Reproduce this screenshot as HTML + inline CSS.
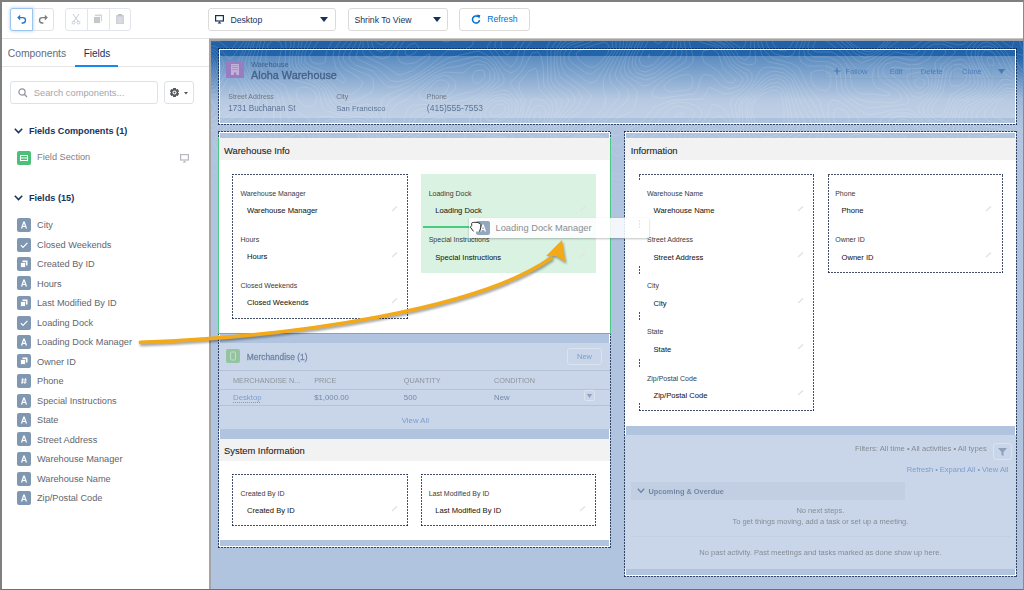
<!DOCTYPE html>
<html><head><meta charset="utf-8"><style>
*{box-sizing:border-box;margin:0;padding:0}
html,body{width:1024px;height:590px;overflow:hidden;background:#fff}
body{font-family:"Liberation Sans",sans-serif;position:relative;color:#16325c}
.a{position:absolute}
.t{position:absolute;white-space:nowrap;line-height:1}
svg{position:absolute;overflow:visible}
.dash{position:absolute}
.dash::before{content:"";position:absolute;left:1px;top:1px;right:1px;bottom:1px;box-shadow:inset 0 0 0 1px #fff}
.dash::after{content:"";position:absolute;left:0;top:0;right:0;bottom:0;background:repeating-linear-gradient(90deg,rgba(22,36,70,0.8) 0 2px,transparent 2px 3px) left top/100% 1px no-repeat,repeating-linear-gradient(90deg,rgba(22,36,70,0.8) 0 2px,transparent 2px 3px) left bottom/100% 1px no-repeat,repeating-linear-gradient(0deg,rgba(22,36,70,0.8) 0 2px,transparent 2px 3px) left top/1px 100% no-repeat,repeating-linear-gradient(0deg,rgba(22,36,70,0.8) 0 2px,transparent 2px 3px) right top/1px 100% no-repeat}
.fdash{position:absolute;background:repeating-linear-gradient(90deg,rgba(22,36,70,0.8) 0 2px,transparent 2px 3px) left top/100% 1px no-repeat,repeating-linear-gradient(90deg,rgba(22,36,70,0.8) 0 2px,transparent 2px 3px) left bottom/100% 1px no-repeat,repeating-linear-gradient(0deg,rgba(22,36,70,0.8) 0 2px,transparent 2px 3px) left top/1px 100% no-repeat,repeating-linear-gradient(0deg,rgba(22,36,70,0.8) 0 2px,transparent 2px 3px) right top/1px 100% no-repeat}
.fdashnl{position:absolute;background:repeating-linear-gradient(90deg,rgba(22,36,70,0.8) 0 2px,transparent 2px 3px) left top/100% 1px no-repeat,repeating-linear-gradient(90deg,rgba(22,36,70,0.8) 0 2px,transparent 2px 3px) left bottom/100% 1px no-repeat,repeating-linear-gradient(0deg,rgba(22,36,70,0.8) 0 2px,transparent 2px 3px) right top/1px 100% no-repeat}
</style></head><body>
<div class="a" style="left:0px;top:0px;width:1024px;height:38px;background:#fff"></div>
<div class="a" style="left:0px;top:38px;width:1024px;height:1px;background:#e4e4e4"></div>
<div class="a" style="left:10px;top:8px;width:44px;height:23px;border:1px solid #dfe3ea;border-radius:3px;background:#fff"></div>
<div class="a" style="left:10px;top:8px;width:23px;height:23px;border:1px solid #9cc4ee;border-radius:3px 0 0 3px;box-shadow:0 0 3px 1px #cfe2f8;background:#fff"></div>
<svg style="left:16px;top:13px" width="12" height="12" viewBox="0 0 12 12"><path d="M3.2 4.6 H6.8 a2.7 2.7 0 0 1 0 5.4 H5.6" fill="none" stroke="#2c74c4" stroke-width="1.4"/><path d="M1.2 4.6 L4.2 1.8 V7.4 Z" fill="#2c74c4"/></svg>
<svg style="left:37px;top:13px" width="12" height="12" viewBox="0 0 12 12"><path d="M8.8 4.6 H5.2 a2.7 2.7 0 0 0 0 5.4 H6.4" fill="none" stroke="#7a7c80" stroke-width="1.4"/><path d="M10.8 4.6 L7.8 1.8 V7.4 Z" fill="#7a7c80"/></svg>
<div class="a" style="left:65px;top:8px;width:66px;height:23px;border:1px solid #e2e6ec;border-radius:3px;background:#fff"></div>
<div class="a" style="left:87px;top:8px;width:1px;height:23px;background:#e2e6ec"></div>
<div class="a" style="left:109px;top:8px;width:1px;height:23px;background:#e2e6ec"></div>
<svg style="left:70px;top:13px" width="12" height="12" viewBox="0 0 12 12"><path d="M3 1 L8.5 9 M9 1 L3.5 9" stroke="#c9cdd2" stroke-width="1"/><circle cx="3.5" cy="9.6" r="1.4" fill="none" stroke="#c9cdd2"/><circle cx="8.5" cy="9.6" r="1.4" fill="none" stroke="#c9cdd2"/></svg>
<svg style="left:92px;top:13px" width="12" height="12" viewBox="0 0 12 12"><rect x="3" y="1.5" width="7" height="7" fill="#d2d5d9"/><rect x="1.5" y="3.5" width="7" height="7" fill="#c4c8cd" stroke="#fff" stroke-width="0.8"/></svg>
<svg style="left:114px;top:13px" width="12" height="12" viewBox="0 0 12 12"><rect x="2" y="2" width="8" height="9" fill="#cfd2d6"/><rect x="4" y="1" width="4" height="2" fill="#bfc3c8"/><path d="M3.5 5h5M3.5 7h5M3.5 9h5" stroke="#e8eaec" stroke-width="0.8"/></svg>
<div class="a" style="left:208px;top:8px;width:128px;height:23px;border:1px solid #dddbda;border-radius:3px;background:#fff"></div>
<svg style="left:215px;top:15px" width="9" height="9" viewBox="0 0 9 9"><rect x="0.6" y="0.6" width="7.8" height="5.4" fill="none" stroke="#16325c" stroke-width="1.2"/><path d="M2.5 8.6 L4.5 6.6 L6.5 8.6 Z" fill="#16325c"/></svg>
<div class="t" style="left:230.4px;top:15.85px;font-size:8.7px;color:#16325c;">Desktop</div>
<svg style="left:320px;top:17px" width="8" height="5" viewBox="0 0 8 5"><path d="M0 0H8L4 5Z" fill="#16325c"/></svg>
<div class="a" style="left:348px;top:8px;width:100px;height:23px;border:1px solid #dddbda;border-radius:3px;background:#fff"></div>
<div class="t" style="left:354.4px;top:15.85px;font-size:8.7px;color:#16325c;">Shrink To View</div>
<svg style="left:433px;top:17px" width="8" height="5" viewBox="0 0 8 5"><path d="M0 0H8L4 5Z" fill="#16325c"/></svg>
<div class="a" style="left:459px;top:8px;width:71px;height:23px;border:1px solid #dddbda;border-radius:3px;background:#fff"></div>
<svg style="left:471px;top:14px" width="11" height="11" viewBox="0 0 11 11"><path d="M8.6 6.2 A3.6 3.6 0 1 1 7.2 2.6" fill="none" stroke="#0070d2" stroke-width="1.5"/><path d="M5.6 0.6 L9.4 1.2 L8.2 4.8 Z" fill="#0070d2"/></svg>
<div class="t" style="left:487.2px;top:14.85px;font-size:8.7px;color:#0070d2;">Refresh</div>
<div class="t" style="left:7.75px;top:48.75px;font-size:10.3px;color:#5f6a7d;">Components</div>
<div class="t" style="left:83.7px;top:48.90px;font-size:10.0px;color:#16325c;">Fields</div>
<div class="a" style="left:0px;top:66px;width:209px;height:1px;background:#e6e6e6"></div>
<div class="a" style="left:75px;top:65px;width:43px;height:2px;background:#1589ee"></div>
<div class="a" style="left:10px;top:81px;width:148px;height:23px;border:1px solid #dde2ea;border-radius:3px;background:#fff"></div>
<svg style="left:18px;top:88px" width="10" height="10" viewBox="0 0 10 10"><circle cx="4" cy="4" r="3.1" fill="none" stroke="#8f939a" stroke-width="1.2"/><path d="M6.3 6.3 L9 9" stroke="#8f939a" stroke-width="1.3"/></svg>
<div class="t" style="left:33.8px;top:88.55px;font-size:9.3px;color:#a3a6ab;">Search components...</div>
<div class="a" style="left:164px;top:81px;width:30px;height:23px;border:1px solid #dde2ea;border-radius:3px;background:#fff"></div>
<svg style="left:169.3px;top:87.2px" width="11" height="11" viewBox="0 0 11 11"><path d="M3.76 2.46 L4.20 0.98 L6.80 0.98 L7.24 2.46 L7.26 2.48 L8.76 2.12 L10.06 4.37 L9.00 5.49 L9.00 5.51 L10.06 6.63 L8.76 8.88 L7.26 8.52 L7.24 8.54 L6.80 10.02 L4.20 10.02 L3.76 8.54 L3.74 8.52 L2.24 8.88 L0.94 6.63 L2.00 5.51 L2.00 5.49 L0.94 4.37 L2.24 2.12 L3.74 2.48Z" fill="#54565a"/><circle cx="5.5" cy="5.5" r="2" fill="#fff"/><circle cx="5.5" cy="5.5" r="1" fill="#54565a"/></svg>
<svg style="left:183.6px;top:91.8px" width="4" height="3" viewBox="0 0 4 3"><path d="M0 0H4L2 2.6Z" fill="#54565a"/></svg>
<svg style="left:14px;top:128px" width="9" height="6" viewBox="0 0 9 6"><path d="M0.8 0.8 L4.5 4.6 L8.2 0.8" fill="none" stroke="#16325c" stroke-width="1.5"/></svg>
<div class="t" style="left:28.9px;top:127.03px;font-size:9.13px;color:#16325c;font-weight:bold;">Fields Components (1)</div>
<div class="a" style="left:17px;top:151px;width:14px;height:14px;background:#4bc076;border-radius:2px"></div>
<svg style="left:20px;top:155px" width="8" height="6" viewBox="0 0 8 6"><rect x="0.5" y="0.5" width="7" height="5" fill="none" stroke="#fff" stroke-width="1"/><path d="M0.5 3h7" stroke="#fff"/></svg>
<div class="t" style="left:37.1px;top:153.40px;font-size:9.2px;color:#7d8087;">Field Section</div>
<svg style="left:180px;top:154px" width="9" height="9" viewBox="0 0 9 9"><rect x="0.6" y="0.6" width="7.8" height="5.4" fill="none" stroke="#b5b8bc" stroke-width="1.2"/><path d="M2.5 8.6 L4.5 6.6 L6.5 8.6 Z" fill="#b5b8bc"/></svg>
<svg style="left:14px;top:195px" width="9" height="6" viewBox="0 0 9 6"><path d="M0.8 0.8 L4.5 4.6 L8.2 0.8" fill="none" stroke="#16325c" stroke-width="1.5"/></svg>
<div class="t" style="left:28.9px;top:194.02px;font-size:9.16px;color:#16325c;font-weight:bold;">Fields (15)</div>
<div class="a" style="left:17px;top:218px;width:14px;height:14px;background:#7f97b0;border-radius:2px"></div>
<svg style="left:17px;top:218px" width="14" height="14" viewBox="0 0 14 14"><path d="M3.9 10.6 L6.3 3.6 H7.7 L10.1 10.6 H8.7 L8.2 9 H5.8 L5.3 10.6 Z M6.15 7.9 H7.85 L7 5.2 Z" fill="#fff" fill-rule="evenodd"/></svg>
<div class="t" style="left:37px;top:221.10px;font-size:9.2px;color:#62666d;">City</div>
<div class="a" style="left:17px;top:238px;width:14px;height:14px;background:#7f97b0;border-radius:2px"></div>
<svg style="left:17px;top:238px" width="14" height="14" viewBox="0 0 14 14"><path d="M3.8 7.2 L6 9.4 L10.4 4.8" fill="none" stroke="#fff" stroke-width="1.2"/></svg>
<div class="t" style="left:37px;top:240.60px;font-size:9.2px;color:#62666d;">Closed Weekends</div>
<div class="a" style="left:17px;top:257px;width:14px;height:14px;background:#7f97b0;border-radius:2px"></div>
<svg style="left:17px;top:257px" width="14" height="14" viewBox="0 0 14 14"><rect x="5.5" y="3.5" width="5" height="5" fill="#fff"/><rect x="3.5" y="5.5" width="5" height="5" fill="#fff" stroke="#7f97b0" stroke-width="0.8"/></svg>
<div class="t" style="left:37px;top:260.10px;font-size:9.2px;color:#62666d;">Created By ID</div>
<div class="a" style="left:17px;top:276px;width:14px;height:14px;background:#7f97b0;border-radius:2px"></div>
<svg style="left:17px;top:276px" width="14" height="14" viewBox="0 0 14 14"><path d="M3.9 10.6 L6.3 3.6 H7.7 L10.1 10.6 H8.7 L8.2 9 H5.8 L5.3 10.6 Z M6.15 7.9 H7.85 L7 5.2 Z" fill="#fff" fill-rule="evenodd"/></svg>
<div class="t" style="left:37px;top:279.60px;font-size:9.2px;color:#62666d;">Hours</div>
<div class="a" style="left:17px;top:296px;width:14px;height:14px;background:#7f97b0;border-radius:2px"></div>
<svg style="left:17px;top:296px" width="14" height="14" viewBox="0 0 14 14"><rect x="5.5" y="3.5" width="5" height="5" fill="#fff"/><rect x="3.5" y="5.5" width="5" height="5" fill="#fff" stroke="#7f97b0" stroke-width="0.8"/></svg>
<div class="t" style="left:37px;top:299.10px;font-size:9.2px;color:#62666d;">Last Modified By ID</div>
<div class="a" style="left:17px;top:316px;width:14px;height:14px;background:#7f97b0;border-radius:2px"></div>
<svg style="left:17px;top:316px" width="14" height="14" viewBox="0 0 14 14"><path d="M3.8 7.2 L6 9.4 L10.4 4.8" fill="none" stroke="#fff" stroke-width="1.2"/></svg>
<div class="t" style="left:37px;top:318.60px;font-size:9.2px;color:#62666d;">Loading Dock</div>
<div class="a" style="left:17px;top:335px;width:14px;height:14px;background:#7f97b0;border-radius:2px"></div>
<svg style="left:17px;top:335px" width="14" height="14" viewBox="0 0 14 14"><path d="M3.9 10.6 L6.3 3.6 H7.7 L10.1 10.6 H8.7 L8.2 9 H5.8 L5.3 10.6 Z M6.15 7.9 H7.85 L7 5.2 Z" fill="#fff" fill-rule="evenodd"/></svg>
<div class="t" style="left:37px;top:338.10px;font-size:9.2px;color:#62666d;">Loading Dock Manager</div>
<div class="a" style="left:17px;top:354px;width:14px;height:14px;background:#7f97b0;border-radius:2px"></div>
<svg style="left:17px;top:354px" width="14" height="14" viewBox="0 0 14 14"><rect x="5.5" y="3.5" width="5" height="5" fill="#fff"/><rect x="3.5" y="5.5" width="5" height="5" fill="#fff" stroke="#7f97b0" stroke-width="0.8"/></svg>
<div class="t" style="left:37px;top:357.60px;font-size:9.2px;color:#62666d;">Owner ID</div>
<div class="a" style="left:17px;top:374px;width:14px;height:14px;background:#7f97b0;border-radius:2px"></div>
<svg style="left:17px;top:374px" width="14" height="14" viewBox="0 0 14 14"><path d="M5.8 4 L5 10 M8.6 4 L7.8 10 M4.2 6 H9.8 M4 8.2 H9.6" fill="none" stroke="#fff" stroke-width="0.9"/></svg>
<div class="t" style="left:37px;top:377.10px;font-size:9.2px;color:#62666d;">Phone</div>
<div class="a" style="left:17px;top:394px;width:14px;height:14px;background:#7f97b0;border-radius:2px"></div>
<svg style="left:17px;top:394px" width="14" height="14" viewBox="0 0 14 14"><path d="M3.9 10.6 L6.3 3.6 H7.7 L10.1 10.6 H8.7 L8.2 9 H5.8 L5.3 10.6 Z M6.15 7.9 H7.85 L7 5.2 Z" fill="#fff" fill-rule="evenodd"/></svg>
<div class="t" style="left:37px;top:396.60px;font-size:9.2px;color:#62666d;">Special Instructions</div>
<div class="a" style="left:17px;top:413px;width:14px;height:14px;background:#7f97b0;border-radius:2px"></div>
<svg style="left:17px;top:413px" width="14" height="14" viewBox="0 0 14 14"><path d="M3.9 10.6 L6.3 3.6 H7.7 L10.1 10.6 H8.7 L8.2 9 H5.8 L5.3 10.6 Z M6.15 7.9 H7.85 L7 5.2 Z" fill="#fff" fill-rule="evenodd"/></svg>
<div class="t" style="left:37px;top:416.10px;font-size:9.2px;color:#62666d;">State</div>
<div class="a" style="left:17px;top:432px;width:14px;height:14px;background:#7f97b0;border-radius:2px"></div>
<svg style="left:17px;top:432px" width="14" height="14" viewBox="0 0 14 14"><path d="M3.9 10.6 L6.3 3.6 H7.7 L10.1 10.6 H8.7 L8.2 9 H5.8 L5.3 10.6 Z M6.15 7.9 H7.85 L7 5.2 Z" fill="#fff" fill-rule="evenodd"/></svg>
<div class="t" style="left:37px;top:435.60px;font-size:9.2px;color:#62666d;">Street Address</div>
<div class="a" style="left:17px;top:452px;width:14px;height:14px;background:#7f97b0;border-radius:2px"></div>
<svg style="left:17px;top:452px" width="14" height="14" viewBox="0 0 14 14"><path d="M3.9 10.6 L6.3 3.6 H7.7 L10.1 10.6 H8.7 L8.2 9 H5.8 L5.3 10.6 Z M6.15 7.9 H7.85 L7 5.2 Z" fill="#fff" fill-rule="evenodd"/></svg>
<div class="t" style="left:37px;top:455.10px;font-size:9.2px;color:#62666d;">Warehouse Manager</div>
<div class="a" style="left:17px;top:472px;width:14px;height:14px;background:#7f97b0;border-radius:2px"></div>
<svg style="left:17px;top:472px" width="14" height="14" viewBox="0 0 14 14"><path d="M3.9 10.6 L6.3 3.6 H7.7 L10.1 10.6 H8.7 L8.2 9 H5.8 L5.3 10.6 Z M6.15 7.9 H7.85 L7 5.2 Z" fill="#fff" fill-rule="evenodd"/></svg>
<div class="t" style="left:37px;top:474.60px;font-size:9.2px;color:#62666d;">Warehouse Name</div>
<div class="a" style="left:17px;top:491px;width:14px;height:14px;background:#7f97b0;border-radius:2px"></div>
<svg style="left:17px;top:491px" width="14" height="14" viewBox="0 0 14 14"><path d="M3.9 10.6 L6.3 3.6 H7.7 L10.1 10.6 H8.7 L8.2 9 H5.8 L5.3 10.6 Z M6.15 7.9 H7.85 L7 5.2 Z" fill="#fff" fill-rule="evenodd"/></svg>
<div class="t" style="left:37px;top:494.10px;font-size:9.2px;color:#62666d;">Zip/Postal Code</div>
<div class="a" style="left:209px;top:38px;width:815px;height:552px;background:#a4a4a4"></div>
<div class="a" style="left:209px;top:38px;width:815px;height:1px;background:#c8c8c8"></div>
<div class="a" style="left:211px;top:41px;width:812px;height:548px;background:linear-gradient(#1f60a8 0px,#2365ab 15px,#a0b8d8 59px,#b0c4df 84px,#b0c4df 100%)"></div>
<svg style="left:0;top:0;opacity:0.17;-webkit-mask-image:linear-gradient(to bottom,#000 0,#000 125px,transparent 230px)" width="1024" height="590" viewBox="0 0 1024 590"><defs><clipPath id="cc"><rect x="211" y="41" width="812" height="548"/></clipPath></defs><g clip-path="url(#cc)"><path d="M196 41 205 38 207 35 208 26 M839 26 843 35 852 44 862 50 868 52 877 49 883 44 888 35 890 26 M943 26 948 29 952 29 958 26 M777 131 784 122 784 107 781 94 778 91 772 90 763 94 755 101 752 107 752 113 756 125 761 131 769 134 777 131 M196 118 205 114 208 107 205 101 196 97 M585 164 591 161 593 158 592 154 589 152 582 155 578 161 580 164 585 164 M911 233 911 227 904 212 900 206 895 204 892 206 889 212 889 218 891 224 901 233 907 235 911 233 M1033 242 1027 245 1025 248 1027 252 1033 253 M561 359 562 356 560 350 556 346 553 346 549 353 550 359 556 362 561 359 M933 395 936 389 937 374 949 369 953 365 953 356 951 353 946 350 940 352 937 356 934 368 919 374 915 380 917 389 921 395 928 397 933 395 M1033 453 1021 455 1018 458 1017 464 1021 492 1026 500 1033 503 M552 566 561 560 563 554 563 548 556 543 541 542 538 548 540 560 544 565 552 566 M837 599 835 597 832 596 829 599 M196 43 206 41 211 38 212 26 M722 26 726 29 733 31 738 29 739 26 M835 26 840 35 850 45 859 52 868 55 877 51 886 44 891 35 893 26 M936 26 943 31 952 33 958 32 963 26 M772 137 784 131 789 122 785 95 781 88 775 86 766 89 757 96 751 104 749 110 753 125 757 133 763 137 772 137 M234 95 236 92 235 89 232 86 229 92 231 95 234 95 M196 122 208 118 213 113 215 107 212 101 208 98 196 94 M586 167 592 164 596 158 595 152 592 149 583 150 573 161 572 164 574 167 580 168 586 167 M916 242 919 236 918 230 901 202 895 200 889 205 886 212 885 218 888 227 895 236 904 243 910 245 916 242 M1033 238 1021 241 1017 245 1016 251 1018 257 1021 259 1033 260 M863 314 864 308 862 304 859 301 853 303 852 308 853 311 859 315 863 314 M562 365 566 359 563 347 556 339 550 340 545 350 544 362 546 365 550 367 556 367 562 365 M929 401 937 396 945 380 952 374 956 368 958 362 957 356 954 350 949 346 943 346 937 349 928 362 914 371 910 377 911 386 916 394 922 400 929 401 M641 413 641 407 640 405 637 405 634 408 634 413 637 415 641 413 M214 449 219 446 221 443 221 440 217 437 208 437 200 443 200 446 205 449 214 449 M1033 449 1024 449 1018 451 1015 455 1014 464 1015 485 1017 494 1025 503 1033 507 M557 569 563 563 567 554 568 545 565 539 535 528 529 529 528 536 538 566 547 572 557 569 M840 599 838 595 832 593 829 594 826 599 M931 599 925 596 904 594 898 595 894 599 M230 26 226 33 220 35 216 26 M196 45 217 41 220 42 229 49 232 49 240 38 243 26 M656 26 658 31 661 33 664 31 666 26 M715 26 724 32 736 36 742 32 743 26 M831 26 833 32 841 41 856 54 865 58 874 55 886 47 893 38 897 26 M911 26 913 28 916 29 925 26 940 33 955 35 964 32 967 26 M196 125 210 122 223 111 235 105 241 100 243 92 238 81 232 76 229 77 220 93 217 95 196 92 M442 95 446 92 449 86 448 83 444 80 439 80 434 83 426 92 427 95 430 97 436 97 442 95 M772 140 786 134 793 125 787 92 784 86 778 82 769 84 760 90 751 99 747 107 748 117 753 134 760 139 772 140 M585 170 592 167 598 161 598 152 592 146 586 147 580 150 571 158 567 164 568 168 571 171 577 172 585 170 M259 158 261 155 260 152 256 149 254 152 254 155 259 158 M913 257 922 246 924 233 901 197 895 196 889 201 883 209 882 215 882 224 887 233 907 257 913 257 M615 251 619 248 622 239 621 230 616 227 610 230 605 245 607 250 615 251 M1033 235 1018 237 1013 242 1010 251 1012 257 1018 263 1024 265 1033 264 M403 275 405 269 403 267 400 266 397 269 397 272 400 275 403 275 M297 299 301 293 299 287 295 283 290 284 287 287 288 293 292 298 297 299 M871 320 869 305 865 298 856 296 849 299 847 305 850 315 856 319 865 323 868 323 871 320 M244 320 244 313 241 312 241 320 244 320 M419 329 422 323 421 320 416 317 409 318 403 323 403 326 406 330 412 331 419 329 M523 398 532 392 544 376 562 370 568 365 569 356 566 347 559 336 553 331 550 331 545 335 536 362 511 395 510 398 514 400 523 398 M618 365 625 354 627 347 625 341 619 338 614 344 612 359 613 365 616 366 618 365 M930 404 934 403 940 399 947 386 959 371 961 365 960 356 958 350 952 344 946 343 937 345 925 359 910 368 905 374 906 383 913 395 922 403 930 404 M694 362 698 356 698 353 694 351 688 353 685 359 688 363 694 362 M280 398 283 395 282 389 277 380 274 377 271 377 268 389 270 398 274 401 280 398 M641 422 646 418 648 410 646 399 640 393 637 394 631 401 626 413 628 418 631 421 637 423 641 422 M575 434 577 428 575 425 571 424 567 425 565 428 567 434 571 435 575 434 M196 453 208 454 218 452 226 446 228 440 227 437 223 434 217 432 208 433 196 436 M1033 446 1021 446 1015 448 1012 455 1011 464 1011 485 1013 494 1024 506 1033 510 M973 479 976 473 973 461 970 455 964 450 961 452 964 465 968 476 970 478 973 479 M526 488 529 485 530 482 526 480 521 482 518 488 520 491 526 488 M479 500 480 497 477 491 472 487 470 488 469 491 471 497 475 500 479 500 M554 578 565 567 570 557 574 533 572 524 568 521 562 520 547 524 526 520 520 521 520 530 528 548 535 568 547 578 550 580 554 578 M626 563 627 560 625 559 622 560 622 563 626 563 M682 599 682 587 679 584 673 593 672 599 M843 599 840 593 832 590 827 593 824 599 M937 599 934 596 928 593 904 592 895 594 890 599 M196 46 214 46 220 49 229 59 232 58 244 41 248 26 M325 26 320 38 309 56 312 62 316 64 322 64 325 62 327 50 336 35 337 26 M652 26 655 42 658 44 664 40 667 36 670 26 M711 26 717 32 739 40 744 35 747 26 M827 26 829 32 833 38 856 60 862 63 874 58 901 39 910 40 928 33 959 38 967 34 971 26 M650 56 649 54 648 56 649 58 650 56 M196 128 211 126 238 110 244 104 248 95 244 83 232 67 229 68 220 84 216 89 211 91 196 90 M479 83 485 77 484 71 481 70 475 71 472 77 474 83 479 83 M958 86 964 83 967 77 964 71 958 68 952 71 949 80 951 86 958 86 M435 101 445 98 455 89 456 83 451 77 445 75 436 78 429 83 420 92 419 95 421 99 427 101 435 101 M769 143 781 140 793 134 797 131 799 125 789 89 784 81 778 78 769 80 760 87 749 98 745 107 748 131 750 137 757 141 769 143 M540 119 541 116 540 113 538 112 535 114 534 119 535 122 538 122 540 119 M262 164 267 158 266 152 260 143 253 142 250 143 248 149 249 158 256 165 262 164 M501 158 503 152 502 146 499 145 496 145 492 149 492 155 496 160 501 158 M583 173 597 167 601 161 601 152 595 145 589 144 583 146 564 161 563 167 568 174 574 175 583 173 M860 161 862 158 859 161 860 161 M915 266 921 263 925 257 928 239 928 230 913 213 903 194 898 191 892 195 882 206 878 215 878 224 882 233 894 248 899 263 901 266 907 268 915 266 M618 254 625 247 627 236 625 227 622 223 616 221 610 223 607 227 601 242 600 248 602 251 607 255 613 255 618 254 M1033 232 1018 233 1012 236 1008 242 1006 251 1009 260 1015 266 1021 269 1033 268 M404 281 409 276 410 269 407 263 400 261 394 265 392 272 397 280 404 281 M676 275 676 272 673 274 673 275 676 275 M300 302 304 293 302 284 295 279 287 281 283 287 286 297 292 303 295 304 300 302 M872 329 875 326 876 320 872 299 869 293 865 291 859 291 847 295 844 299 843 305 847 316 862 327 868 329 872 329 M247 326 249 320 248 311 244 305 241 303 238 305 237 308 237 323 241 329 244 329 247 326 M423 332 426 329 429 323 426 317 421 314 415 313 409 314 403 318 399 323 400 329 406 333 415 334 423 332 M491 416 505 407 529 400 535 395 548 380 553 377 568 372 571 370 572 362 569 347 556 324 553 321 547 323 540 329 533 356 522 374 502 398 489 407 487 413 491 416 M622 374 631 347 626 338 619 334 616 335 613 338 607 365 610 371 613 373 619 375 622 374 M939 404 945 398 959 377 963 365 963 356 960 347 955 342 949 340 940 341 934 344 922 356 902 368 897 377 900 383 919 404 928 407 939 404 M196 357 199 353 199 349 196 346 M696 365 701 359 703 353 703 350 697 347 691 347 685 350 680 359 681 365 685 367 691 367 696 365 M274 407 284 401 287 398 288 392 274 364 268 362 265 365 265 404 268 408 274 407 M640 428 649 422 652 416 652 407 650 395 646 387 643 385 637 383 634 384 631 388 622 413 623 419 628 425 634 428 640 428 M578 437 580 434 581 428 579 422 571 419 561 422 559 428 561 434 565 437 571 439 578 437 M196 457 211 457 223 453 231 446 234 437 232 431 226 430 211 429 196 432 M976 485 980 482 981 476 976 458 971 449 964 443 958 440 955 441 953 443 953 449 964 479 970 485 976 485 M1033 444 1018 443 1012 446 1009 455 1006 488 1008 494 1015 503 1024 510 1033 512 M885 458 886 455 883 450 880 449 877 450 876 452 878 458 880 460 883 461 885 458 M563 599 561 581 570 563 581 533 589 524 601 519 607 514 611 506 610 501 601 500 580 511 559 512 544 517 538 517 527 512 524 506 525 500 535 490 537 485 537 479 532 473 526 472 517 476 502 495 496 500 490 497 475 479 469 477 466 478 461 485 462 494 475 506 505 521 511 525 525 548 531 569 546 587 548 599 M433 515 436 514 440 509 441 503 439 500 433 500 428 506 429 512 433 515 M629 566 632 560 631 556 628 554 622 555 616 560 616 565 619 568 625 568 629 566 M686 599 688 578 685 573 682 573 678 575 673 582 667 599 M845 599 841 591 832 588 826 591 823 599 M940 599 934 592 922 589 898 590 891 593 887 599 M196 132 208 132 214 130 226 121 241 114 251 104 253 98 252 92 240 71 238 62 247 41 251 26 M318 26 315 35 305 53 305 62 310 66 328 73 343 83 346 80 336 68 333 56 334 50 345 35 346 26 M649 26 648 41 639 59 641 65 646 67 653 65 664 52 670 40 673 26 M707 26 712 32 727 39 742 49 745 45 749 26 M823 26 824 35 827 41 844 54 859 73 862 74 878 59 895 48 910 49 925 39 931 37 961 41 970 35 975 26 M196 48 208 48 215 50 221 56 224 65 220 77 214 86 208 88 196 88 M402 125 409 107 415 105 436 104 460 94 475 91 484 86 490 80 490 71 484 65 478 64 472 66 463 73 445 72 433 77 406 100 397 104 391 110 389 116 391 123 397 127 402 125 M941 116 944 113 951 95 970 83 970 74 967 68 961 64 953 65 947 71 943 92 932 107 931 110 934 115 937 116 941 116 M781 143 802 134 805 131 806 125 798 107 790 83 784 77 775 75 766 78 749 95 742 104 742 110 744 134 748 141 763 145 781 143 M538 128 544 122 546 113 544 107 538 105 532 109 528 119 530 125 534 128 538 128 M257 170 262 169 268 164 271 155 265 143 259 137 253 136 247 139 245 143 243 152 250 167 253 170 257 170 M501 164 505 161 508 152 505 142 499 139 490 145 488 149 488 155 490 161 493 164 501 164 M581 176 597 170 604 164 605 158 604 152 601 146 595 142 589 142 583 144 561 158 559 161 560 170 565 177 571 179 581 176 M851 179 869 161 871 155 868 150 862 150 857 152 844 172 842 179 844 181 847 182 851 179 M937 275 932 251 933 227 932 224 922 219 915 212 910 203 904 186 901 185 898 186 882 203 876 212 874 218 876 230 891 251 891 269 901 273 922 272 934 277 937 275 M948 218 956 212 959 206 958 202 952 202 946 207 942 215 943 218 948 218 M620 257 629 248 631 242 631 233 630 227 625 221 619 218 613 218 607 221 604 226 596 248 599 254 604 257 613 259 620 257 M262 230 264 227 262 224 256 221 253 222 253 227 256 230 262 230 M508 242 511 236 510 230 508 226 502 225 499 227 498 230 499 236 502 241 508 242 M363 242 367 238 368 233 364 230 358 230 355 233 353 239 355 243 358 244 363 242 M1033 230 1015 229 1009 231 1003 239 1001 248 1006 260 1015 270 1021 272 1033 272 M408 284 413 275 412 263 406 258 397 258 389 266 388 275 393 281 397 284 403 286 408 284 M679 281 682 278 684 272 681 266 676 264 668 269 666 275 670 281 679 281 M829 281 829 275 824 269 820 267 814 269 813 275 816 281 823 284 829 281 M297 308 302 305 306 299 306 287 300 278 295 276 289 277 282 281 280 284 280 290 289 305 292 308 297 308 M877 332 881 323 874 281 843 293 840 299 840 305 843 314 847 320 868 334 874 334 877 332 M492 425 496 423 508 411 535 401 553 382 572 377 576 374 577 368 573 353 557 311 557 305 559 296 556 289 553 289 550 293 552 308 547 314 533 326 531 350 521 371 505 390 487 401 481 407 479 413 481 419 487 424 492 425 M244 335 250 328 251 314 247 302 238 297 235 299 234 302 234 323 238 332 241 335 244 335 M429 335 442 328 447 320 447 314 445 313 433 314 418 309 412 309 403 314 397 320 396 326 397 329 403 334 415 337 429 335 M645 431 652 425 656 416 652 374 637 374 633 371 631 365 635 350 633 344 625 334 616 331 613 333 610 338 603 362 603 368 607 374 623 386 624 395 618 413 621 422 628 430 634 433 640 433 645 431 M940 407 947 401 961 380 965 368 966 356 964 347 960 341 952 337 943 337 933 341 919 353 899 362 886 377 886 380 889 383 901 389 919 406 928 410 940 407 M196 363 202 360 204 353 202 346 196 341 M688 371 697 367 703 361 709 350 709 347 706 344 691 344 685 347 678 353 674 359 674 365 679 370 688 371 M262 419 287 404 290 401 292 395 277 361 274 358 268 356 262 357 259 359 259 362 261 377 261 398 254 419 262 419 M578 440 583 434 584 428 583 422 581 419 574 416 568 415 560 416 555 419 553 422 553 428 559 437 568 442 574 442 578 440 M196 460 217 458 229 453 235 446 243 428 243 425 238 424 196 428 M981 488 984 485 986 479 976 452 970 444 961 436 955 434 952 435 947 440 945 446 955 463 962 482 964 485 970 489 976 490 981 488 M1033 441 1015 440 1009 444 1001 488 1003 497 1009 503 1022 512 1033 515 M884 473 890 461 891 452 889 448 884 443 874 441 868 446 867 455 877 470 880 473 884 473 M568 599 567 581 579 548 589 531 607 519 613 512 618 500 618 494 604 495 580 504 556 507 544 511 538 512 533 509 531 503 541 490 541 479 535 469 526 467 520 468 514 472 502 485 496 489 490 488 475 473 469 471 463 472 459 476 451 494 448 495 433 495 426 500 423 506 424 512 428 518 433 521 439 518 451 495 463 502 493 524 508 531 522 551 526 569 542 587 545 599 M631 482 634 478 635 473 634 470 631 469 628 473 627 479 628 483 631 482 M256 485 262 479 262 475 259 472 250 473 246 476 246 482 250 486 256 485 M332 494 337 491 338 488 337 482 331 479 325 481 321 485 322 490 327 494 332 494 M630 569 633 566 635 560 634 554 631 552 622 552 616 555 612 560 612 566 614 569 622 571 630 569 M854 557 855 554 853 552 850 551 847 554 849 557 854 557 M689 599 695 569 688 566 682 567 676 571 667 587 663 599 M848 599 843 590 835 586 826 588 822 593 821 599 M944 599 935 590 922 586 895 589 887 593 883 599 M1033 589 1024 593 1021 599 M196 136 202 137 208 140 210 143 198 155 198 158 208 163 214 162 218 155 217 149 214 143 216 137 226 127 247 118 258 104 258 95 245 74 241 65 242 59 250 41 254 26 M312 26 310 35 302 53 301 62 306 68 325 77 343 94 349 95 358 91 363 83 358 77 343 68 338 59 340 50 349 38 351 26 M646 26 645 38 637 54 635 62 637 68 641 71 646 72 655 68 670 55 672 50 676 26 M704 26 709 33 727 42 733 47 739 57 745 60 750 56 752 26 M820 26 818 35 813 47 814 51 817 52 832 52 843 59 849 68 852 86 857 92 862 94 874 94 886 96 890 95 888 92 877 88 874 85 872 77 874 68 882 59 895 52 913 55 917 53 925 44 931 41 942 41 958 45 964 44 975 35 981 26 M992 26 1000 35 1006 38 1010 35 1013 26 M196 49 208 50 214 52 219 59 221 65 219 74 214 82 208 85 196 86 M944 119 954 98 958 95 970 89 975 83 974 77 970 67 964 60 961 59 952 61 944 68 940 89 928 107 928 113 934 119 940 121 944 119 M401 131 408 125 413 113 418 110 469 99 478 95 489 86 494 80 495 74 492 68 487 63 478 60 460 66 445 68 433 74 409 90 391 100 388 104 385 110 386 122 389 128 393 131 401 131 M1033 63 1027 65 1028 68 1033 71 M780 146 808 138 812 134 813 128 810 119 802 106 792 80 784 73 775 71 769 72 763 76 741 101 739 110 741 137 745 144 751 146 763 148 780 146 M541 131 547 121 550 110 548 104 544 101 535 98 532 100 529 106 525 119 525 125 532 132 538 133 541 131 M683 116 682 113 679 113 675 116 679 117 683 116 M254 176 262 173 269 167 273 161 274 155 273 149 265 137 259 132 253 129 247 131 244 135 240 143 239 149 246 176 250 177 254 176 M668 143 667 135 664 131 658 132 652 137 651 140 655 143 664 145 668 143 M503 167 510 161 511 152 508 139 502 136 496 137 490 140 485 146 484 152 486 161 490 167 496 169 503 167 M580 179 608 167 609 161 607 152 604 146 598 141 592 139 586 141 555 158 555 167 562 178 571 182 580 179 M849 188 874 158 875 152 871 147 862 145 856 148 838 173 836 179 837 185 844 189 849 188 M395 188 398 182 397 175 394 169 388 166 385 170 385 177 391 189 394 190 395 188 M878 338 883 332 885 326 880 299 881 290 884 284 892 278 916 277 925 281 937 292 942 290 945 281 936 251 935 242 937 233 941 227 955 219 967 207 973 204 983 203 983 200 961 195 952 195 946 200 934 216 925 217 918 212 912 203 910 194 910 180 907 178 901 179 895 184 876 206 869 218 870 230 886 251 886 257 883 262 868 267 859 281 853 285 844 286 838 285 833 272 826 265 817 262 811 264 808 272 810 281 817 287 832 291 835 293 839 311 844 320 865 338 871 340 878 338 M621 260 628 255 633 248 635 242 635 233 632 224 627 218 621 215 613 215 607 217 603 221 593 245 593 251 598 257 604 260 613 261 621 260 M269 233 272 227 266 221 256 217 249 218 247 224 253 232 262 235 269 233 M508 251 511 250 515 245 515 233 511 222 508 220 502 219 495 224 494 233 499 245 505 250 508 251 M1033 227 1003 223 999 230 996 245 1000 257 1015 274 1021 277 1033 276 M363 248 374 236 376 230 374 227 367 225 358 226 349 233 348 242 352 248 358 251 363 248 M407 290 412 286 415 279 416 269 415 260 409 255 397 254 391 258 387 263 384 269 384 275 387 281 394 287 403 290 407 290 M681 284 687 278 689 269 685 262 682 260 676 259 666 266 663 272 663 278 667 284 670 285 681 284 M362 287 364 286 367 281 367 275 363 269 358 267 352 271 351 278 355 285 362 287 M299 311 306 305 309 299 309 287 307 281 301 275 295 273 289 274 278 281 277 290 289 310 295 313 299 311 M579 443 584 437 587 428 587 422 583 416 574 412 546 407 548 395 555 386 562 383 578 383 582 380 585 374 566 329 563 311 563 290 559 281 556 279 550 282 543 290 543 305 541 311 529 318 526 323 528 347 524 359 518 371 502 389 479 401 475 407 474 416 480 425 496 436 499 433 504 419 511 413 526 409 541 409 543 410 543 425 551 434 565 444 574 445 579 443 M196 464 218 461 229 458 236 452 244 437 250 430 291 407 296 401 295 392 277 356 271 352 255 350 250 347 249 341 254 323 253 308 247 297 235 291 232 291 230 296 232 326 241 346 253 362 257 371 259 383 257 401 250 411 241 417 223 423 196 425 M432 365 439 359 441 347 451 327 454 314 454 308 451 305 448 305 433 308 415 305 409 306 395 317 393 323 393 329 397 334 403 337 423 341 429 344 430 350 426 362 427 365 432 365 M639 440 652 432 657 425 659 416 659 392 664 381 670 377 688 374 697 370 703 365 715 351 733 344 736 341 735 338 727 336 694 341 682 345 667 355 655 354 643 355 635 341 626 332 616 328 610 331 605 350 598 365 598 371 618 389 619 395 614 413 617 422 631 438 634 440 639 440 M942 410 949 405 963 383 968 368 968 353 966 341 961 336 955 333 946 333 937 336 916 350 898 354 881 371 878 377 880 384 901 393 916 407 922 411 931 413 942 410 M196 367 205 364 208 356 204 344 196 338 M338 389 340 383 337 377 325 370 322 369 319 371 320 380 325 388 331 390 338 389 M1004 392 1006 389 1003 389 1004 392 M412 413 411 410 406 407 402 410 401 413 406 416 412 413 M1033 439 1015 436 1009 437 1004 446 1001 473 997 478 994 479 988 472 976 447 967 437 958 430 952 430 937 440 925 443 922 446 920 452 922 455 925 456 940 454 946 457 954 467 960 485 967 492 976 494 991 493 1002 506 1024 516 1033 518 M887 482 896 458 896 452 893 446 886 440 877 436 871 436 865 440 862 445 860 452 861 458 879 482 883 484 887 482 M577 599 573 587 573 578 580 552 590 536 612 518 626 497 637 484 641 473 640 466 637 461 634 459 628 462 619 482 613 488 574 501 553 502 545 500 546 485 541 471 535 464 523 461 514 464 502 477 496 481 490 480 475 468 469 466 461 467 457 470 448 487 427 494 423 497 420 503 421 512 427 523 433 527 439 525 451 505 457 503 472 511 493 529 508 539 517 551 519 560 517 565 508 568 505 571 503 578 504 581 508 582 520 575 526 576 538 585 542 593 543 599 M258 488 267 479 268 472 265 469 259 468 246 470 243 473 241 479 244 487 250 491 258 488 M334 497 339 494 342 488 340 479 331 475 320 479 316 485 319 492 326 497 334 497 M196 512 199 511 201 506 199 501 196 498 M772 557 775 553 775 546 772 541 769 540 763 546 762 554 766 558 772 557 M857 563 861 557 861 551 853 545 844 546 840 551 843 560 850 564 857 563 M257 563 263 557 264 551 250 546 244 548 243 557 247 563 253 564 257 563 M629 572 634 569 637 563 637 554 631 549 622 549 616 552 610 557 608 566 609 569 613 572 622 573 629 572 M693 599 694 587 699 578 715 569 718 566 718 560 712 553 706 553 694 560 682 563 676 566 662 590 659 599 M850 599 849 593 844 587 835 583 829 584 824 587 821 593 819 599 M948 599 943 593 937 589 928 584 922 583 892 588 883 593 880 599 M1033 585 1021 590 1016 599 M251 599 250 596 244 593 241 593 238 599 M409 599 406 595 403 595 402 599 M196 166 220 174 221 176 221 191 224 194 232 195 241 193 247 189 271 170 277 161 278 155 277 149 262 122 267 107 266 98 250 77 245 65 246 59 253 41 257 26 M307 26 298 56 299 65 304 70 324 80 340 99 349 102 355 101 367 95 372 92 374 86 373 80 370 76 351 68 346 64 343 59 344 53 354 38 355 26 M480 26 484 31 487 30 490 26 M643 26 642 38 633 56 632 65 637 73 646 76 655 73 676 56 679 26 M701 26 704 32 707 35 727 45 739 62 748 65 754 64 756 62 754 41 755 26 M816 26 815 32 808 44 808 53 814 57 829 57 838 61 845 71 846 86 849 92 856 98 868 102 892 103 899 101 902 98 898 91 883 82 878 77 878 68 886 60 895 57 910 60 916 60 922 56 928 47 934 44 943 44 951 47 955 50 955 53 941 65 937 89 923 107 924 113 929 119 937 124 943 125 946 123 949 119 954 104 958 98 973 91 978 86 978 77 966 53 968 47 979 36 985 32 991 34 1012 48 1018 26 M196 50 211 53 217 59 218 65 216 74 212 80 205 84 196 84 M1033 58 1018 54 1016 56 1017 62 1020 68 1027 74 1033 76 M404 134 411 128 415 119 421 114 448 107 466 105 478 98 494 86 499 80 498 74 494 65 487 59 478 56 448 63 436 69 409 86 385 96 381 101 381 107 385 127 388 132 394 136 404 134 M540 140 551 119 553 107 551 101 539 89 537 71 535 68 529 71 519 83 519 89 525 101 520 127 522 131 527 134 538 140 540 140 M777 149 814 142 818 137 818 128 814 115 805 101 793 76 784 69 769 67 763 68 760 71 752 86 737 101 735 107 738 122 738 140 742 147 751 150 777 149 M579 182 601 174 622 174 627 170 635 155 643 150 652 149 667 153 673 152 675 149 675 134 676 130 693 119 695 113 691 109 685 107 676 106 670 109 655 125 636 140 625 152 619 156 613 154 604 141 595 137 586 139 565 150 547 152 553 170 559 180 568 185 579 182 M232 144 229 146 226 140 227 134 232 131 235 132 236 134 232 144 M505 170 512 164 514 155 512 134 505 132 496 134 487 139 482 146 481 152 484 164 488 170 496 172 505 170 M851 194 862 176 878 158 880 149 874 143 862 142 853 145 832 176 830 182 832 188 844 195 847 196 851 194 M229 173 225 173 223 170 226 159 229 153 232 154 235 158 238 167 235 171 229 173 M432 371 453 362 451 347 459 311 457 302 451 300 430 305 416 299 414 296 414 293 418 277 419 263 418 254 415 251 403 250 394 252 388 256 376 271 370 267 365 260 364 257 367 251 388 227 402 194 402 182 400 172 394 163 388 160 383 164 381 170 387 197 383 212 376 220 358 223 352 225 347 230 344 236 345 245 351 257 350 263 346 272 345 278 352 290 364 297 370 298 372 296 376 285 379 283 403 296 405 299 405 302 391 317 389 323 390 329 397 336 415 342 421 346 423 350 419 365 420 371 424 373 432 371 M1033 225 1021 223 1014 218 1010 212 1007 200 985 192 949 188 946 191 934 211 931 213 925 214 919 210 914 203 912 194 914 188 922 180 928 179 944 182 946 180 947 176 946 168 940 167 922 174 904 173 895 178 884 194 864 212 861 218 862 236 865 239 874 244 878 248 879 254 877 256 874 257 868 255 859 246 856 249 852 260 855 275 850 280 843 278 838 269 831 263 817 257 811 258 808 260 805 266 803 275 805 281 811 287 829 295 832 299 838 315 844 323 865 343 874 346 884 344 887 338 888 323 884 299 886 290 892 284 901 282 916 283 923 287 934 303 940 303 946 299 950 290 950 281 940 254 939 239 944 230 970 212 979 213 985 218 987 224 986 239 988 245 1015 278 1021 282 1033 280 M740 194 743 188 740 182 733 180 727 184 725 188 727 194 733 197 740 194 M1018 191 1020 188 1020 185 1018 184 1015 187 1014 191 1018 191 M275 236 279 233 286 222 298 212 298 209 296 206 289 207 280 218 277 219 253 213 247 214 244 218 245 227 253 235 265 238 275 236 M621 263 628 259 636 251 639 242 639 233 634 221 628 215 622 212 613 212 605 215 601 219 588 251 592 257 601 261 613 264 621 263 M511 260 520 249 520 239 514 218 508 215 502 216 493 221 491 227 491 236 494 245 502 257 508 262 511 260 M431 242 436 236 436 230 434 224 430 223 424 228 422 239 424 245 431 242 M682 239 685 230 682 226 679 224 673 223 668 227 667 233 670 237 676 241 679 241 682 239 M683 287 689 284 693 278 696 266 693 260 688 255 682 252 679 252 670 258 662 266 660 272 660 278 663 284 667 288 673 289 683 287 M589 599 586 590 580 583 578 578 578 569 581 557 595 536 613 520 641 485 644 479 645 470 642 449 657 434 661 428 663 419 664 398 667 390 676 383 700 371 718 354 739 348 747 338 746 335 742 333 725 332 691 339 670 347 649 347 643 345 625 328 613 325 607 329 603 347 598 358 592 364 586 363 578 353 568 326 566 311 567 290 563 275 563 266 559 264 555 266 541 283 528 290 534 302 532 306 523 311 519 317 524 338 524 347 521 359 515 371 508 381 499 388 475 397 469 407 468 416 469 422 486 437 493 451 502 460 502 467 497 473 493 474 478 464 463 462 457 463 454 466 447 482 442 486 422 494 418 500 417 506 422 521 430 533 436 538 442 529 448 515 454 508 460 507 472 514 502 542 510 551 510 557 502 568 500 575 500 581 502 586 505 588 508 587 520 580 526 580 536 587 540 599 M300 314 307 307 311 299 311 284 309 278 304 273 298 271 289 271 277 278 273 284 273 290 289 314 295 317 300 314 M196 467 226 463 235 459 251 434 283 415 298 411 302 404 300 392 289 375 281 356 274 350 259 345 255 341 256 317 252 299 247 293 226 280 225 287 229 305 231 329 235 350 238 356 249 365 253 371 256 380 254 395 248 407 233 416 220 420 196 421 M502 314 504 311 504 308 501 305 493 304 489 308 489 314 493 317 502 314 M947 413 968 380 971 359 971 335 961 329 949 329 934 334 913 344 895 344 889 346 873 374 872 380 874 386 880 389 898 394 916 410 925 415 937 416 947 413 M196 372 208 371 211 368 213 359 212 353 208 344 202 338 196 335 M342 395 345 392 347 386 346 380 343 375 325 364 319 363 315 365 313 368 313 374 316 386 319 392 328 396 342 395 M571 497 559 497 552 494 541 464 535 458 523 454 517 450 508 434 506 425 510 419 513 416 526 413 532 417 537 431 541 435 565 446 574 447 580 445 585 440 588 434 590 425 589 418 586 413 580 410 559 402 556 398 556 395 561 389 580 390 592 380 598 380 609 386 614 392 614 398 610 410 611 416 627 440 629 449 618 476 613 484 607 487 571 497 M1003 401 1009 398 1014 392 1014 386 1009 381 1006 380 1000 383 993 392 994 398 997 401 1003 401 M733 404 736 401 738 395 736 390 733 389 724 394 721 401 721 404 724 406 733 404 M406 422 416 419 420 413 415 404 409 400 403 401 398 404 390 416 390 419 394 421 406 422 M373 425 374 422 372 419 367 416 361 415 358 418 359 422 364 426 370 427 373 425 M1033 436 1012 432 1006 433 1002 440 999 464 997 469 994 471 988 465 982 452 976 443 964 430 955 425 949 425 937 433 922 440 915 446 912 452 916 458 922 461 940 459 946 462 952 470 956 485 960 491 967 496 985 502 991 513 1009 514 1033 521 M890 488 892 485 895 470 902 452 895 443 883 434 874 431 868 432 862 436 859 441 855 452 855 461 877 487 883 489 890 488 M255 494 262 490 273 479 275 473 270 467 262 464 250 464 244 466 239 470 238 479 241 488 247 494 255 494 M334 500 340 497 345 491 345 482 342 476 337 473 328 473 316 476 312 479 311 485 317 494 325 499 334 500 M196 517 204 515 206 509 202 497 196 492 M780 566 782 563 783 557 779 539 775 533 769 532 763 537 758 545 754 554 754 560 760 564 780 566 M254 569 266 560 274 551 275 548 271 545 256 542 241 535 238 536 236 542 241 562 247 569 254 569 M854 569 863 563 866 557 865 551 856 542 850 540 844 540 838 545 836 548 837 557 844 567 850 570 854 569 M625 575 634 572 638 566 640 560 639 551 631 546 622 547 613 551 607 557 604 563 604 569 607 573 615 575 625 575 M696 599 697 591 700 584 718 574 724 566 722 557 718 551 712 547 706 548 694 555 679 560 675 563 657 593 655 599 M316 578 318 575 316 571 313 575 316 578 M854 599 852 593 847 585 841 581 835 580 829 582 823 585 820 590 818 599 M953 599 947 593 937 586 928 581 922 580 889 586 879 593 875 599 M1033 579 1018 587 1012 593 1009 599 M256 599 253 592 244 587 237 590 234 599 M413 599 411 593 406 589 403 589 400 592 398 599 M454 599 451 593 448 592 445 594 443 599 M993 599 985 593 976 591 972 593 967 599 M196 220 208 220 226 203 244 199 275 170 283 158 284 152 273 131 274 107 273 98 269 92 253 77 249 68 249 59 260 26 M299 26 300 38 295 59 297 68 304 73 322 82 328 89 335 101 340 105 349 107 367 104 373 106 385 133 388 137 394 140 403 138 412 134 423 119 427 116 445 112 460 114 463 113 487 94 504 83 504 77 495 62 487 55 478 51 448 58 409 82 397 87 388 87 385 85 373 71 355 65 349 59 350 53 357 41 358 26 M473 26 478 35 484 38 490 35 495 26 M541 26 543 32 547 34 565 29 570 26 M641 26 639 38 629 59 628 68 631 73 636 77 646 80 655 77 680 59 682 53 680 41 682 26 M698 26 703 35 724 45 734 62 739 66 750 71 752 74 752 80 748 86 733 98 730 104 735 122 735 140 739 149 748 153 775 152 796 148 814 149 820 147 823 143 823 134 817 110 793 71 784 65 769 62 763 57 758 44 758 26 M813 26 803 47 805 57 811 61 829 62 836 65 840 71 842 89 844 93 856 103 868 108 901 105 906 104 909 101 907 95 901 88 886 78 883 74 883 68 886 64 895 61 910 65 919 64 929 59 934 49 940 48 945 50 946 53 943 56 935 62 936 80 934 89 918 107 920 113 928 121 943 129 946 129 950 125 956 107 959 101 977 92 982 86 982 80 972 59 971 53 975 44 982 38 988 38 997 43 1007 53 1013 65 1018 71 1027 78 1033 80 M1033 54 1024 51 1020 44 1020 38 1024 26 M196 52 205 53 211 55 214 59 216 65 215 71 211 78 205 81 196 82 M572 188 595 178 604 178 619 180 626 179 633 173 640 160 648 155 655 155 673 159 679 159 681 155 680 134 685 129 700 119 702 113 701 110 697 106 688 103 679 102 670 104 660 110 647 125 619 146 613 146 604 137 595 135 586 137 568 147 556 148 549 143 547 137 549 128 557 110 557 104 554 98 544 86 543 65 541 56 538 52 532 53 522 71 510 83 520 98 522 104 521 110 517 121 511 127 493 132 481 140 477 146 479 158 484 170 487 175 493 176 508 172 514 168 516 164 519 140 523 138 526 139 532 144 544 159 557 182 565 188 572 188 M461 143 464 140 465 134 460 125 457 124 450 131 448 137 448 140 454 144 461 143 M1033 173 1027 171 1015 161 1009 159 1002 164 997 179 994 184 982 187 967 187 956 182 952 163 949 159 946 159 925 168 898 171 892 176 884 191 877 198 868 203 862 203 859 201 858 197 860 185 866 176 881 161 884 152 884 146 880 141 874 138 862 138 853 140 846 146 833 164 827 176 824 185 827 191 842 200 848 209 851 233 847 251 844 258 838 261 817 253 811 252 808 253 802 262 799 275 800 281 805 287 829 301 838 320 854 335 869 356 870 362 867 383 870 389 877 392 898 398 919 416 933 422 935 425 907 445 901 443 886 432 877 428 871 427 862 430 856 437 849 458 847 467 850 476 862 480 876 491 889 494 894 491 896 488 899 470 904 463 910 461 922 465 940 464 948 470 955 491 961 497 975 506 978 518 982 523 1006 518 1033 525 M421 380 442 371 451 372 463 378 466 376 466 362 459 350 457 341 464 305 462 299 457 296 451 296 436 301 430 301 424 299 419 293 424 257 427 251 436 242 439 236 440 224 436 216 430 216 422 221 419 227 415 242 412 245 391 247 379 260 376 261 373 259 372 257 373 252 390 236 405 206 408 197 407 185 402 170 394 158 388 156 382 158 378 167 383 194 382 203 379 210 373 216 355 220 349 224 343 230 339 236 339 242 345 257 340 272 341 278 349 293 358 301 367 306 373 308 379 308 385 297 387 296 395 299 396 302 395 305 386 314 385 323 386 329 394 337 416 347 418 353 414 374 417 380 421 380 M196 170 202 172 209 176 211 179 212 185 208 193 196 197 M739 200 748 194 749 191 748 185 743 179 739 176 730 177 724 182 722 185 721 191 724 200 727 203 730 203 739 200 M806 206 808 200 805 196 790 188 787 190 789 197 796 206 802 209 806 206 M931 209 928 210 922 209 916 201 916 192 922 186 931 186 936 188 939 191 938 200 931 209 M462 206 469 203 469 200 451 196 445 197 444 200 445 205 448 207 462 206 M1033 223 1021 219 1017 212 1018 206 1021 202 1027 197 1033 194 M282 239 295 226 309 215 309 209 304 202 298 199 289 200 277 211 271 214 250 208 245 209 242 212 240 218 241 224 244 230 250 236 265 241 274 241 282 239 M594 599 592 584 583 572 583 563 585 557 597 539 615 521 646 485 649 473 649 452 654 446 664 440 667 436 669 404 673 395 686 383 703 372 718 358 742 354 756 341 760 335 760 331 757 328 729 329 715 331 673 341 649 343 640 339 622 324 610 321 607 322 604 326 602 344 598 353 592 358 589 358 583 355 577 344 570 323 568 272 574 262 580 258 607 265 619 266 628 263 638 254 645 239 644 230 634 215 628 211 619 209 607 211 600 215 592 236 580 252 574 255 560 257 551 260 547 263 541 275 532 279 523 275 519 269 519 263 524 254 526 248 517 214 514 212 505 211 496 214 490 219 488 227 489 239 504 272 507 290 504 296 486 302 483 305 482 311 484 317 490 322 508 320 514 324 520 338 520 353 513 371 502 383 490 389 472 389 469 392 466 399 461 416 460 425 463 428 475 433 480 437 484 446 483 455 475 458 454 455 451 460 448 473 445 480 439 485 421 491 417 494 414 500 415 512 424 533 428 551 433 557 439 559 442 559 444 557 446 530 449 518 454 512 457 511 463 512 476 521 498 545 501 551 502 557 497 578 498 587 502 592 508 592 520 583 526 583 535 589 538 599 M686 290 697 284 712 265 713 254 710 242 720 221 721 215 718 212 709 214 694 222 679 218 673 218 667 221 661 227 660 233 670 248 668 254 660 263 657 269 659 284 661 288 667 292 686 290 M1033 433 1003 425 1000 431 997 455 994 462 991 461 980 443 955 416 958 404 970 383 976 348 979 343 994 332 996 326 995 320 988 319 970 324 949 322 919 335 910 337 901 336 895 332 887 302 888 296 892 290 898 287 907 286 916 290 928 310 940 314 946 312 953 296 955 284 952 275 943 254 941 245 942 239 949 230 970 219 976 221 977 224 976 239 979 246 1000 265 1011 278 1014 287 1013 299 1015 300 1027 288 1033 285 M196 472 214 467 229 467 233 470 236 485 241 494 247 499 250 500 256 499 284 476 281 470 273 464 245 458 245 452 250 440 257 434 286 418 292 419 295 421 304 432 307 433 310 433 313 425 311 410 313 403 319 401 346 402 350 398 352 383 350 374 348 371 328 362 319 360 313 361 309 365 307 386 301 384 292 374 282 353 277 348 262 342 259 338 256 302 253 293 235 281 220 262 214 257 208 256 196 258 M196 266 208 270 215 275 219 281 227 308 230 356 232 359 247 368 251 374 253 383 250 398 241 407 220 417 196 417 M297 320 304 314 311 305 315 293 313 281 310 273 304 268 298 267 289 268 280 272 273 278 269 287 271 293 289 319 292 321 297 320 M196 378 208 383 214 382 219 374 221 362 219 356 209 341 202 335 196 332 M717 443 724 434 726 419 740 404 748 386 754 384 770 383 774 377 772 371 751 366 745 367 739 377 722 389 709 404 701 410 699 416 703 442 709 446 717 443 M1004 407 1015 397 1019 389 1014 380 1006 375 994 383 987 392 988 398 994 407 1000 409 1004 407 M577 491 565 494 556 491 537 449 538 446 550 445 574 450 583 447 590 437 594 419 593 413 583 401 584 398 593 389 598 387 601 387 607 392 608 395 604 413 621 437 624 446 624 452 617 473 610 482 604 485 589 487 577 491 M373 434 385 428 409 426 421 422 426 416 424 410 415 396 409 393 400 397 382 412 376 413 358 408 352 408 350 416 354 425 364 433 373 434 M526 440 520 438 513 431 512 425 517 419 523 419 527 422 528 434 526 440 M341 500 347 494 349 485 346 476 340 471 331 469 307 472 298 476 313 494 320 500 331 503 341 500 M196 522 208 522 211 521 212 518 206 497 202 490 196 485 M769 515 770 506 766 500 757 501 745 506 744 509 749 512 766 517 769 515 M783 599 785 590 792 575 792 566 783 533 778 526 772 522 769 522 760 534 744 563 748 567 766 571 772 575 773 581 768 599 M261 599 258 593 249 581 249 578 284 551 286 548 286 545 277 540 256 537 247 527 241 525 229 527 224 530 233 548 241 575 241 578 232 590 231 599 M859 599 850 581 850 578 865 565 869 557 869 551 862 542 850 535 841 537 832 545 832 554 839 572 837 575 821 584 818 590 816 599 M633 575 639 569 643 560 642 551 637 546 628 543 619 545 610 549 602 557 599 569 601 575 616 577 633 575 M700 599 701 593 705 587 723 575 732 566 730 560 715 543 706 544 691 552 679 556 673 560 655 590 652 599 M318 584 323 578 323 569 313 557 310 548 307 547 305 551 309 557 309 560 307 578 310 584 313 586 318 584 M1033 548 1029 554 1029 572 1024 578 1003 594 997 593 976 585 970 587 961 593 955 594 928 577 922 575 886 585 872 593 867 599 M459 599 454 586 448 581 442 587 438 599 M416 599 413 590 406 585 399 587 397 591 396 599 M196 225 211 226 226 212 232 211 239 227 247 236 259 243 274 245 286 244 304 234 313 236 319 235 325 230 324 209 321 203 316 199 301 194 292 194 285 197 274 207 268 209 259 206 254 200 260 188 286 165 292 164 301 169 307 170 310 167 310 164 307 144 304 137 298 133 286 138 281 134 280 104 277 95 272 89 257 77 252 68 252 59 265 26 M284 26 292 33 295 38 292 59 292 65 296 71 319 83 325 89 331 103 335 107 346 110 364 109 370 111 376 119 387 143 387 149 379 157 376 164 380 194 376 209 370 214 349 219 335 230 331 236 339 257 334 275 344 293 355 304 376 317 386 335 394 340 409 346 414 350 414 356 406 386 382 407 376 408 367 406 358 401 356 392 357 371 366 356 364 349 361 348 358 349 352 360 346 363 337 362 322 357 313 358 306 362 301 373 298 373 283 349 277 344 264 338 261 332 260 311 260 299 262 293 268 295 274 301 287 323 292 325 298 324 312 308 317 299 316 275 314 269 310 264 301 263 283 267 272 275 262 288 259 290 247 285 238 279 223 260 214 253 208 251 196 253 M436 26 437 35 442 41 448 42 463 32 469 35 473 41 473 44 470 47 463 50 448 50 431 65 418 74 406 80 397 82 390 80 377 68 357 59 356 56 361 41 361 26 M534 26 534 38 525 50 521 65 517 70 511 73 505 70 487 47 496 33 498 26 M694 26 700 36 706 40 722 47 732 65 746 74 748 80 742 88 733 93 724 94 709 87 703 99 673 100 654 107 642 122 619 135 616 136 604 132 595 132 586 135 568 145 559 146 553 142 550 134 552 125 561 107 562 101 551 89 548 83 547 47 550 41 554 38 576 29 579 26 M637 26 635 38 626 59 624 68 626 74 629 77 643 86 649 85 685 62 687 56 684 41 685 26 M1033 166 1027 164 1015 155 1006 155 999 161 992 176 988 181 979 184 970 184 964 182 960 179 955 157 949 150 928 163 901 166 892 170 880 192 871 198 865 197 862 191 863 185 869 176 884 164 890 149 889 142 880 135 868 133 853 135 835 144 832 142 827 128 820 102 808 87 799 68 793 64 772 58 764 50 761 41 762 26 M809 26 800 47 799 56 801 62 808 66 826 66 832 68 836 74 837 92 843 98 859 110 868 115 895 110 910 109 928 125 946 136 949 137 952 134 957 110 961 104 964 101 979 94 985 86 985 80 975 56 976 49 982 43 988 42 997 47 1003 53 1013 71 1025 80 1033 83 M1033 51 1026 47 1024 41 1027 32 1033 27 M415 53 419 47 415 43 409 45 405 50 406 55 409 56 415 53 M196 53 208 56 212 59 214 65 213 71 209 77 202 80 196 81 M919 98 913 96 901 82 891 74 890 71 891 68 895 67 907 69 922 68 929 71 932 77 932 86 928 93 919 98 M481 135 475 135 471 131 469 122 472 113 483 101 493 93 502 90 508 91 515 98 518 104 518 110 514 119 508 124 481 135 M597 599 598 588 601 583 607 580 634 577 640 573 644 566 646 557 645 551 637 543 625 541 604 546 601 545 605 536 646 491 651 482 655 463 658 458 664 457 682 468 685 467 694 456 712 453 726 446 732 440 732 425 735 419 744 407 751 393 757 390 775 388 779 383 780 371 778 364 763 360 757 356 758 350 767 341 769 335 767 326 760 322 715 328 679 336 661 337 649 339 640 336 619 319 613 316 607 316 601 320 600 323 600 338 598 347 592 353 586 353 580 344 573 320 571 278 573 272 577 266 583 264 616 269 625 268 642 257 651 242 655 240 661 244 664 248 662 254 656 263 654 269 655 281 658 291 661 294 670 295 691 293 700 290 715 277 720 269 721 260 718 239 729 212 736 207 755 197 756 191 745 175 739 172 733 173 726 176 720 182 718 188 717 203 712 208 694 216 679 213 673 213 652 226 646 224 635 212 628 207 616 206 604 209 598 212 595 215 591 233 586 241 580 246 565 252 538 258 535 256 525 236 520 208 517 206 511 207 490 213 487 216 485 221 485 236 488 248 499 272 500 287 496 292 478 302 475 305 475 308 481 320 487 327 493 328 505 325 511 327 516 335 518 347 514 362 505 377 496 384 484 385 478 383 475 380 471 356 462 341 463 326 466 316 471 308 471 302 463 293 457 291 439 298 430 298 424 294 422 287 426 260 441 239 445 218 451 213 475 208 480 203 479 194 475 192 463 193 442 190 436 194 431 206 418 212 415 209 416 197 414 188 394 149 396 146 421 134 429 122 434 119 442 118 445 120 445 125 440 137 445 146 451 149 466 148 472 150 484 180 490 181 511 175 517 171 521 164 523 149 526 147 543 164 555 185 562 190 568 192 574 192 586 184 595 181 601 181 622 185 634 182 638 179 644 164 652 160 661 161 682 169 685 167 686 161 684 143 685 136 689 131 703 122 707 116 712 105 715 104 724 109 729 116 732 125 733 143 736 150 742 156 775 154 796 151 826 158 825 167 816 185 814 187 808 187 790 179 783 179 778 184 767 200 768 209 769 212 774 215 784 213 790 213 797 218 805 226 808 226 815 206 820 199 826 198 832 199 840 206 845 236 844 245 842 251 838 255 832 255 808 243 802 251 795 269 793 275 794 281 804 290 826 303 837 323 850 335 855 341 863 365 861 386 862 389 871 395 898 401 918 419 921 425 916 434 907 440 901 439 877 424 868 424 856 428 851 434 847 449 839 467 838 485 844 491 850 493 865 492 883 497 892 497 898 494 899 491 903 473 907 467 940 469 946 475 952 494 968 509 968 521 968 524 973 528 982 531 997 524 1006 522 1015 524 1033 531 M334 182 339 176 339 173 334 171 327 173 324 179 325 182 328 184 334 182 M196 175 202 177 205 182 203 188 196 191 M928 207 922 205 919 200 919 194 925 190 931 191 934 194 934 200 928 207 M1033 220 1026 218 1022 212 1024 206 1033 200 M406 240 400 239 399 233 403 224 412 216 412 233 409 239 406 240 M973 317 963 317 958 314 956 311 959 281 948 260 945 248 946 239 949 235 955 231 964 228 968 230 972 245 975 251 1000 268 1006 275 1009 284 1007 296 1000 309 973 317 M532 270 529 269 528 266 532 261 535 263 535 266 532 270 M196 270 205 272 211 276 218 287 226 311 226 335 223 344 220 346 217 345 202 332 196 330 M907 326 901 325 898 321 892 305 894 296 901 292 908 293 913 298 918 317 919 320 916 323 907 326 M1033 430 1016 425 1012 422 1007 416 1009 410 1021 395 1023 389 1018 380 1009 371 1003 371 980 389 981 395 994 419 994 434 991 446 985 443 970 428 962 419 960 413 961 407 964 400 975 389 975 365 979 352 985 346 997 341 1000 337 1007 317 1027 296 1033 293 M703 398 694 400 688 398 687 392 690 386 718 363 724 362 730 363 733 368 729 377 703 398 M196 398 211 393 218 389 228 371 232 368 241 369 248 377 249 386 246 395 241 401 228 410 222 413 214 414 205 413 196 409 M264 599 257 584 257 578 268 566 280 558 292 555 298 557 302 563 305 584 310 591 313 591 319 588 325 581 328 572 319 548 315 542 307 540 292 540 266 533 261 530 259 524 258 509 262 500 274 488 283 484 289 483 301 487 319 502 325 504 334 505 343 502 349 497 352 491 353 485 348 473 340 467 319 467 304 464 289 466 271 459 253 456 250 453 250 449 254 440 277 426 286 423 292 427 304 442 310 442 318 434 319 428 319 416 320 410 325 407 331 406 340 410 346 422 355 431 370 442 376 443 388 434 421 427 431 422 432 416 421 398 420 389 425 383 433 378 445 375 451 378 457 383 461 392 458 407 447 428 445 473 442 479 438 482 418 489 413 494 411 503 411 512 420 533 424 554 440 572 440 578 434 599 M839 431 842 428 842 422 838 418 832 419 827 425 828 431 832 434 839 431 M574 488 565 490 560 488 557 485 549 467 548 455 550 452 553 451 574 453 583 451 589 443 598 425 601 422 604 423 613 431 619 443 619 455 614 473 610 479 604 482 586 483 574 488 M691 442 688 443 682 435 681 428 682 424 688 425 692 428 693 434 691 442 M472 453 466 452 462 449 460 443 463 438 469 437 476 440 478 446 477 449 472 453 M751 455 753 449 751 446 745 444 738 446 737 449 740 455 745 457 751 455 M811 464 809 464 811 464 M238 518 226 520 217 514 202 482 203 476 207 473 220 470 226 472 229 475 235 489 246 509 243 515 238 518 M786 599 788 590 798 572 796 537 799 535 808 535 811 533 813 527 812 524 808 524 802 527 796 534 793 532 781 518 772 497 766 494 733 503 728 506 728 509 730 513 751 518 757 521 758 524 756 533 742 553 736 555 733 555 727 550 718 539 715 538 706 541 691 549 676 553 668 560 661 576 651 590 649 599 M462 599 452 563 450 536 452 521 454 517 460 514 466 516 473 521 495 548 497 557 494 581 500 599 M196 527 205 529 220 538 226 544 230 551 234 572 229 587 228 599 M1033 538 1030 541 1027 548 1023 572 1015 581 1003 588 994 588 973 579 961 588 952 589 940 583 925 568 922 568 907 577 877 585 868 586 863 584 861 581 872 560 873 551 870 545 856 531 850 528 834 536 828 542 827 551 832 569 831 572 818 584 815 599 M707 599 709 593 722 581 733 574 739 573 759 575 765 578 766 584 763 599 M420 599 415 587 412 584 406 581 400 583 396 587 394 599 M507 599 514 590 523 586 532 589 536 599 M429 26 427 31 424 34 412 36 404 41 400 47 397 56 400 62 406 64 415 63 427 55 430 54 429 59 412 71 400 75 396 74 385 66 365 56 363 53 363 26 M530 26 528 35 519 50 516 62 511 67 505 63 495 50 495 44 499 34 500 26 M634 26 631 41 620 71 622 77 633 86 637 92 637 98 634 109 631 112 619 117 607 126 589 131 571 142 562 144 555 140 553 131 556 122 569 101 566 95 554 86 551 80 551 50 554 44 559 39 578 32 583 29 585 26 M806 26 798 41 793 55 787 57 775 54 769 49 766 41 768 26 M340 218 337 218 335 215 334 197 336 191 345 179 346 173 344 170 337 166 322 165 319 163 314 155 307 129 303 125 292 121 289 119 281 92 276 86 262 77 256 68 256 60 261 41 265 34 271 29 280 31 289 38 291 44 289 62 290 68 294 74 313 82 319 86 323 92 327 104 333 110 346 113 364 113 370 116 374 122 379 134 381 146 375 158 373 167 377 191 375 203 372 209 367 212 349 215 340 218 M661 98 655 97 652 95 652 92 656 86 667 77 688 67 693 62 693 56 689 41 691 36 703 43 715 46 721 50 728 65 742 77 743 80 739 86 730 89 722 86 712 76 705 74 701 77 698 89 694 94 661 98 M1033 46 1030 44 1029 41 1030 38 1033 36 M1033 160 1015 150 1006 150 997 157 985 177 979 180 970 180 964 176 963 173 957 143 959 116 961 109 967 102 982 95 989 86 989 80 978 59 978 53 982 47 988 46 994 48 1001 56 1008 71 1027 84 1033 87 M196 54 208 58 212 65 211 71 208 75 202 78 196 79 M826 91 820 90 814 86 811 80 811 73 815 71 823 70 830 74 831 83 829 88 826 91 M922 93 916 93 912 89 907 80 907 76 910 74 919 72 925 74 928 77 929 86 922 93 M487 129 481 129 478 128 476 125 475 119 479 110 486 101 493 96 502 94 508 95 515 104 516 110 513 116 505 123 487 129 M847 131 838 133 832 128 828 119 828 110 829 103 832 100 838 101 848 107 857 116 860 122 860 125 847 131 M922 162 901 162 895 160 896 143 892 137 879 125 881 119 892 113 907 113 913 115 936 134 941 143 940 149 931 158 922 162 M559 251 550 252 541 251 535 247 528 236 526 227 525 218 528 206 535 191 532 184 526 182 517 198 508 203 496 206 490 206 488 203 488 194 490 188 502 181 523 178 527 164 529 162 532 161 541 169 547 182 552 188 562 195 571 197 577 196 586 188 595 184 601 184 625 190 643 190 650 185 652 170 658 167 670 170 682 181 685 182 689 179 691 173 688 143 689 137 715 117 721 116 725 119 728 125 731 146 738 164 716 182 713 200 709 205 700 210 694 211 682 207 676 206 652 219 646 217 637 207 631 204 619 203 598 207 593 209 591 212 589 230 584 239 574 246 559 251 M469 188 460 189 442 184 427 189 421 187 412 176 405 164 401 155 402 149 412 143 427 140 433 141 442 150 448 153 469 154 475 163 478 176 475 185 469 188 M766 186 763 186 757 182 747 170 746 164 749 161 760 157 796 155 808 158 813 161 817 165 816 173 811 179 805 180 790 173 784 173 766 186 M268 203 262 200 263 194 268 187 283 174 289 172 292 173 299 179 301 182 300 185 283 192 274 200 268 203 M874 193 868 193 867 185 871 178 880 174 882 176 882 182 879 188 874 193 M925 201 924 197 928 197 927 200 925 201 M835 250 826 248 819 239 820 212 823 206 826 204 832 205 836 212 840 239 839 245 835 250 M1033 216 1030 215 1028 212 1029 209 1033 206 M787 267 784 268 778 265 763 250 754 252 736 262 730 261 725 251 723 239 728 224 736 212 745 208 754 207 759 212 769 225 775 226 787 222 793 225 797 233 798 245 793 260 787 267 M484 293 475 295 460 287 454 288 436 295 430 294 426 290 425 281 428 263 442 242 448 221 454 216 472 214 478 216 480 218 484 248 494 269 496 278 494 287 484 293 M196 230 211 233 223 223 229 221 244 236 253 242 274 249 289 251 295 254 294 257 277 267 262 280 253 283 244 280 238 276 223 256 214 247 208 246 196 249 M973 311 967 311 963 308 962 302 965 287 964 278 952 260 948 251 949 241 952 237 958 235 961 236 964 239 968 251 973 259 994 266 1001 272 1006 281 1004 293 997 304 991 308 973 311 M1003 585 997 585 991 584 973 571 958 585 949 585 937 578 933 572 929 560 925 557 919 560 910 571 904 574 883 580 874 580 871 578 870 575 877 557 877 551 874 545 863 533 856 515 853 513 841 525 829 530 825 527 820 510 799 520 790 519 784 512 778 496 772 486 769 486 751 495 736 497 726 494 718 484 703 481 700 476 700 470 705 464 712 461 724 459 733 463 742 464 761 464 763 461 763 449 761 443 757 439 744 434 740 428 742 419 754 398 760 395 767 395 781 397 792 404 796 402 794 398 785 392 784 383 786 362 779 350 776 335 771 323 766 318 760 317 740 323 715 326 688 332 664 332 646 335 637 330 616 311 607 311 601 313 596 317 595 323 596 341 594 347 589 349 585 347 582 341 575 314 575 281 577 272 583 268 589 267 622 273 646 263 649 267 651 281 649 299 655 301 701 296 727 284 742 273 754 271 763 274 779 284 796 290 822 305 833 323 847 335 852 344 858 371 851 395 856 397 889 401 898 404 910 416 915 425 913 431 910 433 907 435 901 435 877 420 853 422 849 419 841 408 838 408 832 411 827 416 823 428 826 441 829 443 841 442 842 446 839 452 832 456 823 452 799 455 794 458 794 464 800 470 808 475 814 476 823 475 826 476 824 494 826 496 841 498 853 506 856 506 862 500 868 498 889 501 898 499 903 494 907 476 910 473 937 474 942 479 944 494 954 506 954 509 943 518 939 524 940 531 946 533 964 534 979 540 994 530 1003 526 1013 527 1022 533 1024 539 1020 569 1014 578 1003 585 M196 273 208 277 214 283 222 302 224 317 223 331 220 338 214 338 202 329 196 327 M382 402 376 404 367 402 362 398 360 392 360 377 370 362 372 356 372 344 369 338 364 336 358 338 349 353 343 358 337 359 316 354 298 361 295 360 280 341 268 335 265 332 262 314 264 302 268 301 274 305 286 329 289 330 295 329 304 322 318 305 320 299 322 284 324 281 328 280 331 282 346 303 369 320 377 335 389 341 406 347 411 353 410 359 401 383 394 392 382 402 M634 296 628 293 626 296 628 298 634 296 M1033 427 1021 424 1013 416 1014 410 1026 395 1027 389 1010 362 1011 347 1009 332 1011 323 1015 317 1027 303 1033 299 M496 381 490 382 484 381 478 374 477 365 482 344 472 343 469 341 466 335 467 326 469 322 472 320 475 321 479 326 484 340 502 330 508 331 513 338 515 350 511 362 504 374 496 381 M988 377 982 378 979 375 979 362 985 353 994 352 1000 356 1002 362 996 371 988 377 M703 389 701 386 715 372 718 370 723 371 721 377 703 389 M220 408 214 408 212 407 212 404 226 393 232 377 235 375 241 375 244 379 245 383 241 392 220 408 M442 413 436 411 430 405 426 398 425 392 431 383 442 379 451 383 455 389 456 395 451 408 448 411 442 413 M985 435 973 427 965 416 965 407 970 401 976 400 986 413 989 428 988 433 985 435 M314 599 326 584 331 572 331 566 322 544 318 539 313 537 289 535 271 528 266 521 265 506 267 500 272 494 280 489 286 488 298 489 317 503 331 507 337 507 346 503 357 494 358 488 357 482 353 473 348 467 340 463 319 462 313 458 311 455 314 449 324 434 327 416 331 414 335 416 345 428 359 440 373 463 379 469 382 468 384 464 388 446 393 440 427 431 433 431 438 437 443 464 442 473 436 480 418 485 413 488 408 497 406 506 408 515 417 533 420 557 434 575 434 584 427 595 424 593 412 579 406 578 400 580 394 584 393 587 392 599 M289 459 259 453 256 450 256 446 259 441 265 437 280 429 286 430 292 436 297 449 296 455 289 459 M568 485 562 484 556 477 552 467 553 457 559 454 577 457 583 456 589 449 599 431 604 428 607 430 613 437 616 446 614 464 610 474 601 479 583 479 568 485 M599 599 601 590 605 584 614 581 637 579 644 572 649 557 648 551 644 545 634 539 616 538 613 536 615 530 625 517 652 491 658 476 661 471 664 470 667 472 670 476 671 491 673 495 679 495 700 488 706 489 716 500 726 521 748 523 751 525 752 530 745 543 739 548 733 548 730 547 721 533 718 533 691 545 670 552 665 557 658 575 649 587 646 599 M235 512 226 514 220 510 217 506 208 485 209 479 211 476 220 475 227 479 238 503 238 509 235 512 M465 599 454 548 454 524 457 519 460 518 466 519 472 524 492 551 494 560 492 581 496 599 M196 534 217 542 226 551 230 566 226 584 225 599 M789 599 792 590 803 575 805 554 808 549 814 546 817 546 820 550 827 566 825 572 817 579 815 584 813 599 M268 599 261 584 263 575 274 564 280 561 289 560 295 562 298 566 303 587 309 599 M718 599 721 590 726 584 733 579 742 578 757 581 760 587 759 599 M512 599 515 593 523 588 529 590 532 593 534 599 M413 26 399 41 388 57 382 59 373 55 369 50 365 26 M526 26 523 36 508 55 504 53 501 47 503 26 M628 26 627 44 615 74 617 80 628 90 629 95 627 101 604 122 586 130 571 140 562 141 556 137 556 128 562 117 574 104 575 98 571 92 559 84 556 80 554 65 555 50 561 41 583 33 589 26 M802 26 790 47 787 50 784 51 778 50 773 44 772 38 777 26 M364 209 352 209 345 206 342 200 342 194 349 179 349 170 343 164 322 158 317 149 309 119 294 110 285 86 265 74 262 70 260 62 263 47 265 41 271 35 280 36 286 42 285 65 289 77 294 80 310 84 316 87 319 92 322 107 325 110 340 115 364 117 370 121 373 125 378 140 377 146 370 164 374 194 373 200 370 206 364 209 M733 83 727 82 718 71 704 62 702 56 703 51 712 49 718 53 723 68 736 80 733 83 M1033 154 1015 145 1006 144 997 151 982 174 976 176 970 175 967 170 963 149 962 119 963 113 966 107 985 96 992 86 992 77 985 67 981 59 982 54 985 50 988 50 994 53 1005 74 1033 90 M196 56 206 59 209 65 208 71 206 74 196 77 M688 90 670 92 664 89 664 86 670 80 679 76 688 74 692 77 693 83 691 88 688 90 M922 88 919 88 916 86 914 83 916 79 919 78 924 80 925 83 922 88 M499 122 484 124 481 122 480 116 484 107 490 101 496 98 502 97 510 101 512 104 512 110 508 117 499 122 M844 125 838 125 835 122 833 116 835 109 838 108 844 110 849 116 849 122 844 125 M922 158 913 158 905 155 901 140 888 125 890 119 898 116 907 116 913 119 934 137 936 143 935 149 930 155 922 158 M703 204 694 206 688 200 688 194 696 179 691 143 694 137 697 134 718 123 721 123 725 128 733 161 730 167 713 182 710 197 703 204 M466 185 457 185 442 178 427 180 421 178 415 174 409 165 406 158 406 152 412 147 424 145 430 147 445 157 463 157 467 158 472 163 474 173 472 181 466 185 M766 180 760 179 754 173 752 167 754 164 759 161 766 160 775 161 783 164 772 176 766 180 M802 170 788 164 796 161 802 163 806 167 805 169 802 170 M658 210 652 212 649 211 645 203 646 200 659 191 664 182 667 181 670 187 670 197 667 203 658 210 M499 200 495 197 496 191 498 188 505 184 512 185 514 188 512 194 508 198 499 200 M874 185 874 184 874 185 M607 200 592 201 589 199 588 194 592 190 598 188 615 194 616 197 607 200 M562 248 550 250 543 248 535 242 530 233 528 224 530 212 535 203 544 194 550 194 578 206 583 210 586 216 587 227 583 236 574 243 562 248 M742 252 736 253 730 250 727 242 728 236 731 227 736 219 742 215 748 214 754 216 757 220 761 230 762 236 755 245 742 252 M442 290 433 291 429 287 428 278 431 263 444 242 451 222 460 217 472 218 476 221 479 227 481 251 491 275 490 284 484 288 478 289 463 283 457 283 442 290 M256 279 250 279 241 275 219 245 217 239 218 236 226 228 232 228 250 243 277 257 277 260 275 263 262 275 256 279 M787 255 784 256 779 254 774 245 775 239 777 236 784 232 787 233 789 236 791 242 790 250 787 255 M832 239 829 240 829 236 832 239 M196 237 199 239 196 242 M961 260 958 259 955 254 953 248 955 244 958 244 961 249 962 257 961 260 M979 305 973 304 970 303 969 299 973 275 977 269 988 267 994 270 1000 275 1003 281 1003 287 1000 295 994 302 979 305 M589 342 586 339 585 335 585 323 583 321 579 311 578 284 580 275 586 271 592 270 612 275 617 278 620 284 612 302 595 311 587 320 587 326 592 338 589 342 M643 286 637 285 633 281 632 278 634 275 640 272 643 273 646 278 646 282 643 286 M196 275 205 278 212 284 220 303 222 317 220 329 217 333 211 332 196 324 M781 455 778 456 775 454 768 440 754 430 750 425 750 419 754 409 757 404 761 401 769 400 775 402 787 409 793 411 799 410 805 404 804 398 793 389 790 384 791 356 771 314 769 312 763 312 736 321 712 323 688 328 664 327 646 332 640 329 630 320 626 314 626 311 628 308 637 306 655 308 673 301 706 300 730 291 745 279 754 277 763 280 777 293 796 295 820 310 828 323 847 341 851 371 851 377 844 389 823 413 820 422 819 440 817 445 808 449 790 450 781 455 M343 353 337 355 316 352 298 355 292 350 287 341 287 338 301 329 319 308 328 293 331 293 341 305 356 317 360 323 360 326 343 353 M277 330 274 331 271 330 268 326 265 314 268 307 272 308 276 314 277 323 277 330 M1033 386 1027 382 1021 374 1016 362 1018 347 1017 326 1024 312 1033 305 M496 377 490 378 487 377 482 371 483 365 496 340 499 337 505 335 510 341 511 353 505 368 496 377 M379 399 373 399 366 395 363 386 365 377 375 362 379 347 385 345 400 348 407 353 406 362 394 386 385 395 379 399 M988 371 985 372 983 368 984 362 988 359 991 360 993 365 988 371 M445 406 442 406 436 405 432 401 429 395 430 389 439 383 443 383 448 386 451 392 450 401 445 406 M1033 423 1021 419 1018 413 1023 404 1033 397 M907 429 904 430 898 428 877 414 859 416 854 413 854 410 856 406 862 404 895 407 901 411 908 419 909 425 907 429 M979 425 973 421 970 416 970 412 973 408 978 410 982 416 982 424 979 425 M358 464 346 459 328 458 322 455 323 449 334 434 337 433 343 434 355 443 359 452 358 464 M286 449 277 451 267 449 264 446 269 440 280 436 283 436 287 440 288 446 286 449 M607 473 601 476 595 475 585 467 598 441 601 437 604 435 610 440 612 449 611 464 607 473 M320 599 332 578 335 569 326 542 322 537 316 534 292 532 277 526 272 521 270 515 270 506 272 500 280 493 292 491 301 494 313 503 322 508 334 510 343 508 373 494 382 487 388 478 394 459 400 449 416 440 427 439 433 445 438 458 440 467 438 473 433 478 418 481 410 485 402 497 400 509 402 515 412 531 417 560 421 569 427 575 427 581 424 583 418 577 412 575 397 578 391 584 390 599 M568 480 562 478 558 473 556 464 559 459 565 458 571 460 578 464 580 467 574 476 568 480 M751 492 742 494 733 491 729 482 730 476 732 473 739 470 748 469 758 473 761 479 760 485 751 492 M802 513 793 513 787 506 780 485 781 478 784 471 790 471 796 475 805 482 809 488 812 497 811 503 807 509 802 513 M229 508 223 506 217 498 214 485 217 481 223 482 229 492 232 503 229 508 M889 575 880 576 876 572 883 551 879 545 866 530 863 518 864 509 868 503 871 502 892 504 901 502 907 497 916 483 919 482 925 483 938 506 937 515 929 530 926 542 907 566 899 572 889 575 M658 555 643 540 621 533 621 527 628 518 643 505 655 498 658 498 670 504 694 495 703 496 709 500 714 506 718 515 719 521 716 527 709 533 694 541 670 546 658 555 M838 516 835 517 833 512 835 508 838 507 841 512 838 516 M469 599 457 551 457 530 459 524 463 523 469 526 475 532 485 545 490 554 491 563 489 581 492 599 M739 540 736 541 733 540 732 536 734 530 739 528 743 530 744 533 739 540 M1000 582 991 580 985 575 981 566 981 557 986 545 992 536 1000 530 1009 530 1016 533 1020 539 1019 563 1017 569 1012 575 1000 582 M955 582 945 581 937 572 933 548 934 545 937 541 946 539 958 540 964 542 969 548 970 557 966 569 961 578 955 582 M196 548 214 547 220 550 223 554 225 563 221 578 223 599 M652 574 650 572 651 569 655 561 656 569 652 574 M817 569 813 569 814 562 818 563 819 566 817 569 M272 599 265 584 265 578 274 567 286 563 292 565 295 569 302 599 M602 599 603 593 607 586 616 582 628 582 640 582 643 584 644 599 M724 599 725 593 729 587 739 583 748 584 753 587 755 599 M792 599 796 589 802 583 808 582 811 587 812 599 M515 599 519 593 523 591 529 593 532 599 M403 26 391 45 382 52 376 50 373 47 368 26 M522 26 518 35 511 40 508 38 506 26 M622 26 624 38 623 47 611 71 609 77 611 83 619 92 619 98 601 119 571 138 562 139 558 134 560 125 565 118 578 107 582 98 577 89 560 77 557 65 557 53 562 44 568 40 586 35 590 32 593 26 M277 69 271 69 268 67 266 62 266 53 268 44 274 40 280 42 282 47 277 69 M196 58 202 59 207 65 205 71 196 75 M994 65 991 66 988 63 987 59 988 57 993 59 994 65 M1033 149 1012 140 1003 140 995 146 982 167 976 170 972 167 970 160 969 149 969 134 966 119 968 110 988 97 1001 80 1006 79 1012 81 1033 93 M310 107 304 106 298 101 296 92 298 88 307 87 315 92 317 98 316 102 313 106 310 107 M499 119 493 121 487 120 485 116 485 113 488 107 493 102 502 100 508 104 509 110 505 116 499 119 M367 204 358 205 353 203 350 200 349 191 355 173 353 167 343 161 328 157 321 149 316 128 318 119 322 116 361 120 367 122 371 128 374 140 366 164 371 191 370 199 367 204 M925 153 919 154 913 151 908 140 896 128 896 122 901 119 907 120 929 137 931 141 931 146 925 153 M709 180 706 181 703 181 700 175 696 161 695 143 697 139 702 134 712 129 718 129 721 131 724 137 729 155 729 161 726 167 709 180 M463 182 453 179 442 168 427 173 421 172 413 164 411 155 413 152 418 150 427 151 433 155 442 166 457 161 466 162 470 167 471 173 469 179 463 182 M763 173 760 170 760 167 766 165 769 166 769 170 763 173 M700 198 697 197 697 194 700 190 703 189 704 194 703 197 700 198 M562 246 553 247 544 245 538 241 532 233 531 224 532 215 538 206 544 201 553 200 565 205 577 212 583 220 584 227 580 236 572 242 562 246 M439 288 433 286 431 281 434 263 446 245 453 224 460 220 469 221 473 224 476 230 477 254 485 269 486 278 484 282 478 284 463 278 457 278 439 288 M745 245 736 246 732 239 733 233 736 227 739 224 745 221 751 224 754 233 752 239 745 245 M253 276 247 275 241 271 227 251 223 242 226 234 229 233 235 234 268 257 269 260 266 266 259 273 253 276 M988 300 979 298 976 290 979 277 982 273 988 271 997 276 1000 284 997 293 994 297 988 300 M595 305 586 307 583 303 582 299 582 281 586 276 592 274 607 277 612 281 613 284 610 296 604 301 595 305 M196 277 205 280 211 287 217 302 220 314 218 326 214 329 196 321 M649 327 643 327 637 323 633 317 633 314 640 312 658 316 668 308 674 305 700 306 709 304 733 294 751 282 761 284 766 290 769 296 768 302 765 305 756 311 739 318 709 320 688 324 661 320 649 327 M817 406 811 398 797 386 794 380 796 359 796 353 789 338 780 323 776 311 778 304 787 299 796 299 806 305 821 323 840 338 844 344 842 359 845 374 844 380 835 392 817 406 M340 350 334 352 316 350 301 351 295 347 294 341 316 316 325 309 331 307 346 315 352 323 347 341 340 350 M1033 381 1024 374 1021 368 1019 362 1024 344 1023 326 1027 317 1033 312 M493 371 490 368 491 365 498 356 502 346 504 347 505 350 499 365 496 370 493 371 M382 392 376 394 370 392 367 386 368 380 379 365 385 352 391 350 397 351 401 353 402 356 401 362 391 383 382 392 M442 400 436 398 434 395 436 390 439 388 444 389 446 392 445 397 442 400 M1033 418 1027 416 1025 413 1027 407 1033 404 M811 444 799 446 785 443 778 440 759 425 758 419 761 410 766 407 772 407 787 414 793 415 802 413 814 407 816 413 816 434 815 440 811 444 M343 449 340 446 343 445 345 446 343 449 M406 480 400 481 399 479 398 473 400 464 406 459 418 452 424 450 427 451 433 458 435 464 435 470 434 473 427 476 415 476 406 480 M604 470 597 470 594 464 598 454 601 450 604 450 607 454 608 461 607 466 604 470 M568 470 565 471 562 466 565 464 568 467 568 470 M751 488 745 490 739 489 736 485 736 479 742 475 751 475 754 477 756 482 751 488 M799 507 793 506 790 500 788 491 790 484 796 484 804 494 804 503 799 507 M323 599 337 572 338 563 329 539 325 534 316 531 289 528 283 526 277 521 274 515 274 506 276 500 283 495 289 494 298 495 316 508 331 513 340 512 358 505 370 505 379 509 403 525 409 536 413 566 409 570 389 581 387 587 389 599 M664 543 655 544 640 535 628 530 627 527 628 524 640 512 649 507 655 507 670 512 688 501 697 499 703 500 710 506 714 512 715 518 714 524 709 530 694 538 673 539 664 543 M889 569 886 568 885 566 895 554 895 551 871 532 867 521 868 511 874 505 898 507 916 499 922 500 928 505 930 509 928 518 912 536 901 554 898 563 895 566 889 569 M472 599 461 551 462 533 466 530 478 540 487 554 488 563 487 581 489 599 M1000 578 994 578 990 575 987 569 986 563 989 551 994 540 1000 534 1006 533 1012 535 1015 539 1017 548 1016 560 1015 566 1011 572 1000 578 M955 578 952 579 946 578 942 575 939 569 941 551 943 547 949 544 958 546 963 554 961 569 955 578 M196 562 211 555 217 557 218 563 211 575 217 587 220 599 M276 599 269 584 269 578 274 571 283 567 289 568 292 572 297 599 M604 599 605 593 610 587 616 584 625 583 634 584 639 587 642 599 M730 599 733 591 739 588 746 590 749 593 750 599 M794 599 799 590 805 588 808 590 810 599 M519 599 523 595 526 595 529 599 M397 26 391 38 382 45 379 44 375 41 370 26 M515 26 514 28 512 26 M616 26 620 38 620 47 604 77 603 89 606 98 604 107 597 116 572 134 565 136 562 134 561 131 563 125 568 120 583 110 591 98 591 95 585 89 565 74 561 65 560 53 563 47 567 44 591 35 597 26 M196 60 202 62 204 65 202 70 196 73 M1033 145 1009 134 1000 134 985 137 982 135 973 125 971 116 973 110 988 100 1003 85 1012 84 1033 96 M496 116 492 116 490 113 491 110 496 105 502 104 505 107 505 110 502 114 496 116 M361 162 355 163 327 152 323 146 320 137 320 128 323 122 331 119 355 122 361 123 367 127 370 134 371 143 367 153 361 162 M712 174 706 174 702 170 698 161 697 149 699 143 703 137 709 134 715 133 721 138 727 158 722 167 712 174 M982 152 979 153 978 149 979 146 982 144 983 146 982 152 M424 164 419 161 420 158 424 158 426 161 424 164 M463 177 457 176 454 173 453 170 455 167 460 165 465 167 467 173 463 177 M364 199 361 199 358 198 356 194 357 185 361 179 364 180 367 188 367 194 364 199 M565 243 556 245 547 244 541 240 535 233 533 227 534 218 538 211 544 206 553 204 562 207 574 215 580 221 581 227 579 233 572 239 565 243 M442 281 437 281 435 278 438 263 448 245 454 228 460 224 467 224 471 227 473 233 471 257 477 272 475 274 463 272 457 273 442 281 M256 270 247 271 241 267 229 248 228 242 229 239 235 239 261 257 263 263 256 270 M991 293 985 293 982 287 983 281 988 277 994 278 996 284 994 290 991 293 M196 279 202 281 209 287 215 302 218 314 217 320 214 324 211 324 196 318 M595 299 590 299 587 296 587 284 592 279 601 279 606 281 608 284 607 290 602 296 595 299 M739 315 724 316 713 314 712 311 751 288 754 287 759 290 762 296 760 302 753 308 739 315 M820 395 814 394 808 390 802 385 798 380 798 374 802 353 796 335 785 323 782 317 782 311 787 305 793 304 799 306 803 311 808 326 832 339 837 344 835 356 839 371 839 380 832 389 826 394 820 395 M337 347 331 349 307 346 301 344 301 341 316 320 325 314 331 313 343 319 346 326 343 341 337 347 M691 317 679 314 682 313 698 314 691 317 M1033 377 1025 371 1023 362 1025 356 1032 344 1031 332 1033 326 M379 386 375 386 374 383 375 380 379 375 385 373 385 380 379 386 M808 441 802 442 796 441 772 428 766 422 767 416 772 413 787 419 805 417 811 419 813 425 813 434 808 441 M427 467 422 467 423 464 427 466 427 467 M326 599 330 590 346 563 337 551 332 536 328 531 319 527 292 526 282 521 278 515 278 506 281 500 286 497 292 497 298 498 316 511 331 516 340 515 358 508 367 509 400 530 407 542 409 554 409 563 405 569 385 578 383 581 387 599 M661 537 652 537 640 530 636 527 638 521 645 515 652 513 670 522 685 506 694 502 703 504 711 512 712 518 710 524 700 533 688 536 670 531 661 537 M892 539 883 537 874 530 871 518 874 510 880 508 898 511 916 509 919 510 920 515 918 518 901 535 892 539 M1003 573 997 574 994 572 992 569 991 563 997 543 1001 539 1006 537 1012 542 1013 557 1011 566 1003 573 M478 599 465 554 465 545 466 541 469 539 478 545 484 557 482 584 484 599 M955 572 949 575 946 573 944 569 944 560 949 552 952 552 955 553 957 557 957 566 955 572 M282 599 273 581 275 575 278 572 283 571 287 572 290 578 290 599 M606 599 608 593 613 587 625 585 631 586 637 589 640 599 M196 591 205 589 211 590 214 593 216 599 M798 599 799 595 802 593 805 594 807 599 M391 26 388 33 382 37 376 34 374 26 M607 26 616 39 616 50 598 78 595 82 589 83 568 68 564 62 564 53 568 47 571 45 592 38 604 26 M196 62 200 65 199 68 196 70 M1033 142 1009 130 985 126 979 122 976 116 980 110 1006 88 1015 89 1027 96 1033 99 M355 158 337 154 329 149 323 137 323 131 326 125 331 122 340 122 357 125 364 129 367 137 366 146 361 155 355 158 M571 130 568 131 567 128 569 125 574 123 575 125 571 130 M712 171 706 170 703 166 700 152 703 142 712 138 715 138 720 143 724 158 721 165 712 171 M559 242 547 241 541 237 537 230 536 224 537 218 541 212 547 209 553 208 562 211 573 218 577 224 577 230 574 234 567 239 559 242 M451 270 445 272 442 270 442 263 451 248 457 230 463 228 469 232 469 242 462 263 451 270 M253 267 247 267 244 265 235 248 238 246 241 248 255 257 256 263 253 267 M196 282 202 284 208 290 215 311 214 316 211 319 196 315 M733 311 730 311 729 308 748 298 751 297 752 299 751 302 742 308 733 311 M793 318 790 317 790 314 794 314 793 318 M334 345 319 344 309 341 308 338 310 332 316 324 322 320 328 318 334 319 341 326 342 332 340 338 334 345 M823 390 817 390 811 388 805 383 802 377 802 371 805 364 808 360 814 355 820 356 826 359 834 371 835 377 833 383 823 390 M1033 373 1030 371 1027 365 1028 359 1033 355 M802 437 794 434 791 428 796 424 805 423 808 425 809 431 808 434 802 437 M316 522 298 523 289 521 282 515 282 506 284 503 289 500 298 502 318 518 318 521 316 522 M697 531 688 532 685 530 680 524 681 518 684 512 688 508 694 505 703 507 709 515 707 524 697 531 M391 572 385 573 379 572 367 563 343 550 340 545 333 527 333 524 335 521 352 513 364 512 373 516 397 534 404 545 406 560 403 566 391 572 M889 533 880 530 876 524 875 518 877 514 880 513 892 514 901 518 902 521 900 527 895 532 889 533 M1003 567 999 566 997 559 1000 549 1003 545 1006 545 1009 549 1009 557 1007 563 1003 567 M478 567 475 566 470 557 470 551 472 549 476 551 480 557 480 563 478 567 M329 599 332 590 340 579 346 573 352 572 379 586 382 590 385 599 M283 584 280 583 280 578 283 578 284 581 283 584 M608 599 610 593 613 590 619 587 625 587 634 590 638 599 M592 74 586 73 571 62 569 59 569 53 575 47 589 43 601 36 607 36 612 41 613 50 604 64 592 74 M1033 138 1009 126 988 121 984 116 986 110 1006 91 1015 92 1027 100 1033 101 M358 153 349 154 333 149 327 140 326 134 328 128 333 125 340 125 355 128 361 131 364 137 364 143 358 153 M712 167 706 165 703 155 705 146 712 142 718 146 721 155 718 164 712 167 M559 240 553 240 547 238 540 230 540 221 543 215 547 213 553 212 559 213 567 218 573 224 573 230 571 233 559 240 M196 284 202 287 205 290 210 308 208 313 196 311 M331 341 322 342 315 338 315 332 322 325 331 324 337 329 337 335 331 341 M820 386 811 384 806 377 808 368 814 363 823 364 828 368 830 374 830 380 827 383 820 386 M298 518 292 517 288 515 286 509 288 506 295 505 301 509 304 515 298 518 M697 528 689 527 685 521 688 512 694 508 700 509 705 515 706 518 703 524 697 528 M391 569 382 568 346 546 342 539 340 530 341 524 343 521 355 515 364 515 373 520 396 539 403 551 403 560 399 566 391 569 M889 526 886 526 882 524 882 521 883 519 887 518 892 521 892 524 889 526 M331 599 334 591 340 583 349 577 355 578 364 585 376 589 380 593 382 599 M610 599 613 592 622 588 631 590 634 593 636 599 M595 67 589 67 585 65 578 59 576 53 587 47 604 42 607 43 609 47 608 53 601 62 595 67 M1033 135 1027 133 1012 124 997 118 993 116 992 113 999 101 1009 94 1015 95 1027 103 1033 104 M355 150 346 151 334 146 330 137 331 131 334 128 340 127 355 131 358 134 360 140 358 146 355 150 M715 162 709 162 707 158 707 152 709 148 712 147 717 152 718 158 715 162 M559 237 550 236 544 231 542 224 547 217 553 216 559 217 568 224 568 230 559 237 M196 288 203 293 205 302 202 306 196 306 M328 336 322 335 322 332 328 330 330 332 328 336 M823 380 817 382 814 380 811 374 814 369 820 369 824 371 825 377 823 380 M700 521 694 524 691 521 692 515 697 513 700 514 701 518 700 521 M391 566 382 564 349 543 344 533 346 524 355 518 364 519 370 522 391 539 398 548 400 557 397 563 391 566 M334 599 340 587 349 582 355 584 364 590 376 594 379 599 M612 599 615 593 622 590 631 593 634 599" fill="none" stroke="#fff" stroke-width="0.8"/></g></svg>
<div class="dash" style="left:218px;top:48px;width:799px;height:77px"></div>
<div class="a" style="left:220px;top:56px;width:795px;height:62px;background:rgba(255,255,255,0.25)"></div>
<div class="a" style="left:226px;top:61px;width:18px;height:17px;background:#9a7cc0;border-radius:1px"></div>
<svg style="left:226px;top:61px" width="18" height="17" viewBox="0 0 18 17"><path d="M5 14 V4.5 H13 V14 H10.2 V11.5 H7.8 V14 Z" fill="#c2b2da"/><path d="M6.5 6.5h1.2M8.4 6.5h1.2M10.3 6.5h1.2M6.5 8.7h1.2M8.4 8.7h1.2M10.3 8.7h1.2" stroke="#9a7cc0" stroke-width="1"/><rect x="5" y="3" width="8" height="1" fill="#c2b2da"/></svg>
<div class="a" style="left:0;top:0;width:1024px;height:590px;opacity:0.6">
<div class="t" style="left:251.1px;top:61.40px;font-size:7.4px;color:#16325c;">Warehouse</div>
<div class="t" style="left:251.1px;top:69.77px;font-size:10.85px;color:#16325c;-webkit-text-stroke:0.4px #16325c">Aloha Warehouse</div>
<div class="t" style="left:228.3px;top:94.03px;font-size:6.95px;color:#3e3e3c;">Street Address</div>
<div class="t" style="left:228.3px;top:104.52px;font-size:8.17px;color:#16325c;">1731 Buchanan St</div>
<div class="t" style="left:336.2px;top:94.03px;font-size:6.95px;color:#3e3e3c;">City</div>
<div class="t" style="left:336.2px;top:104.74px;font-size:7.71px;color:#16325c;">San Francisco</div>
<div class="t" style="left:426.8px;top:94.03px;font-size:6.95px;color:#3e3e3c;">Phone</div>
<div class="t" style="left:426.8px;top:104.31px;font-size:8.57px;color:#16325c;">(415)555-7553</div>
<div class="a" style="left:824px;top:62px;width:190px;height:17px;border:1px solid rgba(120,140,170,0.3);border-radius:3px;background:rgba(255,255,255,0.04)"></div>
<div class="a" style="left:876px;top:62px;width:1px;height:17px;background:rgba(120,140,170,0.3)"></div>
<div class="a" style="left:911px;top:62px;width:1px;height:17px;background:rgba(120,140,170,0.3)"></div>
<div class="a" style="left:952px;top:62px;width:1px;height:17px;background:rgba(120,140,170,0.3)"></div>
<div class="a" style="left:991px;top:62px;width:1px;height:17px;background:rgba(120,140,170,0.3)"></div>
<svg style="left:833px;top:67px" width="8" height="8" viewBox="0 0 8 8"><path d="M4 0.5V7.5M0.5 4H7.5" stroke="#2a5ea8" stroke-width="1.2"/></svg>
<div class="t" style="left:845.5px;top:67.80px;font-size:7.6px;color:#2a5ea8;">Follow</div>
<div class="t" style="left:889.4px;top:67.80px;font-size:7.6px;color:#2a5ea8;">Edit</div>
<div class="t" style="left:920.8px;top:67.80px;font-size:7.6px;color:#2a5ea8;">Delete</div>
<div class="t" style="left:962px;top:67.80px;font-size:7.6px;color:#2a5ea8;">Clone</div>
<svg style="left:998px;top:69px" width="7" height="5" viewBox="0 0 7 5"><path d="M0 0H7L3.5 5Z" fill="#2a5ea8"/></svg>
</div>
<div class="dash" style="left:218px;top:131px;width:393px;height:417px"></div>
<div class="a" style="left:218px;top:138px;width:393px;height:196px;background:#fff;border:1px solid #4bca81;border-top:none"></div>
<div class="a" style="left:219px;top:138px;width:391px;height:22px;background:#f3f2f2"></div>
<div class="t" style="left:224px;top:146.40px;font-size:9.4px;color:#1e1e1e;-webkit-text-stroke:0.1px #1e1e1e">Warehouse Info</div>
<div class="fdash" style="left:232px;top:174px;width:176px;height:145px"></div>
<div class="t" style="left:240.5px;top:189.70px;font-size:7.0px;color:#3a3a3a;">Warehouse Manager</div>
<div class="t" style="left:247px;top:207.10px;font-size:7.6px;color:#141414;-webkit-text-stroke:0.04px #141414">Warehouse Manager</div>
<svg style="left:390px;top:204px" width="9" height="9" viewBox="0 0 9 9"><path d="M2 7 L7 2.5" stroke="#e3e3e3" stroke-width="1.5"/></svg>
<div class="t" style="left:240.5px;top:235.80px;font-size:7.0px;color:#3a3a3a;">Hours</div>
<div class="t" style="left:247px;top:253.20px;font-size:7.6px;color:#141414;-webkit-text-stroke:0.04px #141414">Hours</div>
<svg style="left:390px;top:250px" width="9" height="9" viewBox="0 0 9 9"><path d="M2 7 L7 2.5" stroke="#e3e3e3" stroke-width="1.5"/></svg>
<div class="t" style="left:240.5px;top:281.90px;font-size:7.0px;color:#3a3a3a;">Closed Weekends</div>
<div class="t" style="left:247px;top:299.30px;font-size:7.6px;color:#141414;-webkit-text-stroke:0.04px #141414">Closed Weekends</div>
<svg style="left:390px;top:296px" width="9" height="9" viewBox="0 0 9 9"><path d="M2 7 L7 2.5" stroke="#e3e3e3" stroke-width="1.5"/></svg>
<div class="a" style="left:421px;top:174px;width:175px;height:99px;background:#d9f2e2"></div>
<div class="t" style="left:428.7px;top:189.80px;font-size:7.0px;color:#3a3a3a;">Loading Dock</div>
<div class="t" style="left:435.3px;top:207.20px;font-size:7.6px;color:#141414;-webkit-text-stroke:0.04px #141414">Loading Dock</div>
<svg style="left:578px;top:204px" width="9" height="9" viewBox="0 0 9 9"><path d="M2 7 L7 2.5" stroke="#e3e3e3" stroke-width="1.5"/></svg>
<div class="t" style="left:428.7px;top:236.10px;font-size:7.0px;color:#3a3a3a;">Special Instructions</div>
<div class="t" style="left:435.3px;top:253.50px;font-size:7.6px;color:#141414;-webkit-text-stroke:0.04px #141414">Special Instructions</div>
<svg style="left:578px;top:250px" width="9" height="9" viewBox="0 0 9 9"><path d="M2 7 L7 2.5" stroke="#e3e3e3" stroke-width="1.5"/></svg>
<div class="a" style="left:423px;top:226px;width:50px;height:2px;background:#4bca81"></div>
<div class="a" style="left:219px;top:343px;width:391px;height:86px;background:#c9d6e9"></div>
<div class="a" style="left:0;top:0;width:1024px;height:590px;opacity:0.5">
</div>
<div class="a" style="left:226px;top:349px;width:14px;height:14px;background:#93c49f;border-radius:2px"></div>
<svg style="left:226px;top:349px" width="14" height="14" viewBox="0 0 14 14"><rect x="4.6" y="3" width="4.8" height="8" rx="0.8" fill="none" stroke="#c3dfca" stroke-width="1"/></svg>
<div class="a" style="left:0;top:0;width:1024px;height:590px;opacity:0.5">
<div class="t" style="left:246.7px;top:352.78px;font-size:8.44px;color:#16325c;-webkit-text-stroke:0.3px #16325c">Merchandise (1)</div>
<div class="a" style="left:219px;top:370px;width:391px;height:1px;background:#a5b2c6"></div>
<div class="a" style="left:589px;top:349px;width:17px;height:0px;"></div>
<div class="a" style="left:567px;top:348px;width:35px;height:17px;border:1px solid #eef0f4;border-radius:3px"></div>
<div class="t" style="left:577px;top:353.15px;font-size:7.5px;color:#2f64b0;">New</div>
<div class="t" style="left:233px;top:376.95px;font-size:7.3px;color:#514f4d;">MERCHANDISE N...</div>
<div class="t" style="left:314.2px;top:376.95px;font-size:7.3px;color:#514f4d;">PRICE</div>
<div class="t" style="left:403.8px;top:376.95px;font-size:7.3px;color:#514f4d;">QUANTITY</div>
<div class="t" style="left:494px;top:376.95px;font-size:7.3px;color:#514f4d;">CONDITION</div>
<div class="a" style="left:219px;top:389px;width:391px;height:1px;background:#a5b2c6"></div>
<div class="t" style="left:233px;top:394.10px;font-size:7.8px;color:#2f64b0;">Desktop</div>
<div class="a" style="left:233px;top:402px;width:27px;height:1px;border-bottom:1px dotted #0070d2"></div>
<div class="t" style="left:314.2px;top:394.10px;font-size:7.8px;color:#16325c;">$1,000.00</div>
<div class="t" style="left:403.8px;top:394.10px;font-size:7.8px;color:#16325c;">500</div>
<div class="t" style="left:494px;top:394.10px;font-size:7.8px;color:#16325c;">New</div>
<div class="a" style="left:584px;top:390px;width:11px;height:11px;border:1px solid #eef0f4;border-radius:2px"></div>
<svg style="left:587px;top:394px" width="5" height="4" viewBox="0 0 5 4"><path d="M0 0H5L2.5 4Z" fill="#54698d"/></svg>
<div class="a" style="left:219px;top:405px;width:391px;height:1px;background:#a5b2c6"></div>
<div class="t" style="left:401.8px;top:416.70px;font-size:7.8px;color:#2f64b0;">View All</div>
</div>
<div class="a" style="left:219px;top:439px;width:391px;height:101px;background:#fff"></div>
<div class="a" style="left:219px;top:439px;width:391px;height:22px;background:#f3f2f2"></div>
<div class="t" style="left:224px;top:445.90px;font-size:9.4px;color:#1e1e1e;-webkit-text-stroke:0.1px #1e1e1e">System Information</div>
<div class="fdash" style="left:232px;top:474px;width:176px;height:52px"></div>
<div class="fdash" style="left:421px;top:474px;width:175px;height:52px"></div>
<div class="t" style="left:240.5px;top:489.90px;font-size:7.0px;color:#3a3a3a;">Created By ID</div>
<div class="t" style="left:247px;top:507.30px;font-size:7.6px;color:#141414;-webkit-text-stroke:0.04px #141414">Created By ID</div>
<svg style="left:390px;top:504px" width="9" height="9" viewBox="0 0 9 9"><path d="M2 7 L7 2.5" stroke="#e3e3e3" stroke-width="1.5"/></svg>
<div class="t" style="left:428.7px;top:489.90px;font-size:7.0px;color:#3a3a3a;">Last Modified By ID</div>
<div class="t" style="left:435.3px;top:507.30px;font-size:7.6px;color:#141414;-webkit-text-stroke:0.04px #141414">Last Modified By ID</div>
<svg style="left:578px;top:504px" width="9" height="9" viewBox="0 0 9 9"><path d="M2 7 L7 2.5" stroke="#e3e3e3" stroke-width="1.5"/></svg>
<div class="dash" style="left:624px;top:131px;width:393px;height:446px"></div>
<div class="a" style="left:625px;top:138px;width:391px;height:288px;background:#fff"></div>
<div class="a" style="left:625px;top:138px;width:391px;height:22px;background:#f3f2f2"></div>
<div class="t" style="left:630.7px;top:146.10px;font-size:9.4px;color:#1e1e1e;-webkit-text-stroke:0.1px #1e1e1e">Information</div>
<div class="fdashnl" style="left:639px;top:174px;width:175px;height:237px"></div>
<div class="a" style="left:639px;top:174px;width:1px;height:6px;background:repeating-linear-gradient(0deg,rgba(22,36,70,0.8) 0 2px,transparent 2px 3px)"></div>
<div class="a" style="left:639px;top:220px;width:1px;height:8px;background:repeating-linear-gradient(0deg,rgba(22,36,70,0.8) 0 2px,transparent 2px 3px)"></div>
<div class="a" style="left:639px;top:265px;width:1px;height:9px;background:repeating-linear-gradient(0deg,rgba(22,36,70,0.8) 0 2px,transparent 2px 3px)"></div>
<div class="a" style="left:639px;top:311px;width:1px;height:9px;background:repeating-linear-gradient(0deg,rgba(22,36,70,0.8) 0 2px,transparent 2px 3px)"></div>
<div class="a" style="left:639px;top:358px;width:1px;height:9px;background:repeating-linear-gradient(0deg,rgba(22,36,70,0.8) 0 2px,transparent 2px 3px)"></div>
<div class="a" style="left:639px;top:403px;width:1px;height:8px;background:repeating-linear-gradient(0deg,rgba(22,36,70,0.8) 0 2px,transparent 2px 3px)"></div>
<div class="t" style="left:647px;top:189.90px;font-size:7.0px;color:#3a3a3a;">Warehouse Name</div>
<div class="t" style="left:653.5px;top:207.30px;font-size:7.6px;color:#141414;-webkit-text-stroke:0.04px #141414">Warehouse Name</div>
<svg style="left:796px;top:204px" width="9" height="9" viewBox="0 0 9 9"><path d="M2 7 L7 2.5" stroke="#e3e3e3" stroke-width="1.5"/></svg>
<div class="t" style="left:647px;top:236.10px;font-size:7.0px;color:#3a3a3a;">Street Address</div>
<div class="t" style="left:653.5px;top:253.50px;font-size:7.6px;color:#141414;-webkit-text-stroke:0.04px #141414">Street Address</div>
<svg style="left:796px;top:250px" width="9" height="9" viewBox="0 0 9 9"><path d="M2 7 L7 2.5" stroke="#e3e3e3" stroke-width="1.5"/></svg>
<div class="t" style="left:647px;top:282.40px;font-size:7.0px;color:#3a3a3a;">City</div>
<div class="t" style="left:653.5px;top:299.80px;font-size:7.6px;color:#141414;-webkit-text-stroke:0.04px #141414">City</div>
<svg style="left:796px;top:296px" width="9" height="9" viewBox="0 0 9 9"><path d="M2 7 L7 2.5" stroke="#e3e3e3" stroke-width="1.5"/></svg>
<div class="t" style="left:647px;top:328.10px;font-size:7.0px;color:#3a3a3a;">State</div>
<div class="t" style="left:653.5px;top:345.50px;font-size:7.6px;color:#141414;-webkit-text-stroke:0.04px #141414">State</div>
<svg style="left:796px;top:342px" width="9" height="9" viewBox="0 0 9 9"><path d="M2 7 L7 2.5" stroke="#e3e3e3" stroke-width="1.5"/></svg>
<div class="t" style="left:647px;top:374.50px;font-size:7.0px;color:#3a3a3a;">Zip/Postal Code</div>
<div class="t" style="left:653.5px;top:391.90px;font-size:7.6px;color:#141414;-webkit-text-stroke:0.04px #141414">Zip/Postal Code</div>
<svg style="left:796px;top:388px" width="9" height="9" viewBox="0 0 9 9"><path d="M2 7 L7 2.5" stroke="#e3e3e3" stroke-width="1.5"/></svg>
<div class="fdash" style="left:828px;top:174px;width:175px;height:99px"></div>
<div class="t" style="left:835.2px;top:189.90px;font-size:7.0px;color:#3a3a3a;">Phone</div>
<div class="t" style="left:841.5px;top:207.30px;font-size:7.6px;color:#141414;-webkit-text-stroke:0.04px #141414">Phone</div>
<svg style="left:984px;top:204px" width="9" height="9" viewBox="0 0 9 9"><path d="M2 7 L7 2.5" stroke="#e3e3e3" stroke-width="1.5"/></svg>
<div class="t" style="left:835.2px;top:236.10px;font-size:7.0px;color:#3a3a3a;">Owner ID</div>
<div class="t" style="left:841.5px;top:253.50px;font-size:7.6px;color:#141414;-webkit-text-stroke:0.04px #141414">Owner ID</div>
<svg style="left:984px;top:250px" width="9" height="9" viewBox="0 0 9 9"><path d="M2 7 L7 2.5" stroke="#e3e3e3" stroke-width="1.5"/></svg>
<div class="a" style="left:625px;top:435px;width:391px;height:134px;background:#c9d6e9"></div>
<div class="a" style="left:0;top:0;width:1024px;height:590px;opacity:0.5">
<div class="t" style="left:855px;top:445.47px;font-size:7.67px;color:#3e3e3c;">Filters: All time • All activities • All types</div>
<div class="a" style="left:993px;top:443px;width:19px;height:17px;border:1px solid #eef0f4;border-radius:3px"></div>
<svg style="left:998px;top:448px" width="9" height="8" viewBox="0 0 9 8"><path d="M0 0H9L5.5 4V8L3.5 7V4Z" fill="#54698d"/></svg>
<div class="t" style="left:906.8px;top:466.45px;font-size:7.5px;color:#2f64b0;">Refresh • Expand All • View All</div>
<div class="a" style="left:631px;top:482px;width:274px;height:18px;background:#bccadd"></div>
<svg style="left:637px;top:488px" width="8" height="6" viewBox="0 0 8 6"><path d="M0.8 0.8 L4 4.2 L7.2 0.8" fill="none" stroke="#16325c" stroke-width="1.3"/></svg>
<div class="t" style="left:648.4px;top:487.81px;font-size:7.38px;color:#16325c;font-weight:bold;">Upcoming &amp; Overdue</div>
<div class="t" style="left:820.4px;top:507.45px;font-size:7.5px;color:#3e3e3c;transform:translateX(-50%)">No next steps.</div>
<div class="t" style="left:820.4px;top:518.45px;font-size:7.5px;color:#3e3e3c;transform:translateX(-50%)">To get things moving, add a task or set up a meeting.</div>
<div class="a" style="left:631px;top:536px;width:379px;height:1px;background:#bdc9da"></div>
<div class="t" style="left:820.4px;top:548.83px;font-size:7.54px;color:#3e3e3c;transform:translateX(-50%)">No past activity. Past meetings and tasks marked as done show up here.</div>
</div>
<div class="a" style="left:469px;top:218px;width:180px;height:20px;background:rgba(255,255,255,0.85);box-shadow:0 1px 2px rgba(0,0,0,0.25)"></div>
<div class="a" style="left:476px;top:221px;width:14px;height:14px;background:#93a8bf;border-radius:2px"></div>
<svg style="left:476px;top:221px" width="14" height="14" viewBox="0 0 14 14"><path d="M3.9 10.6 L6.3 3.6 H7.7 L10.1 10.6 H8.7 L8.2 9 H5.8 L5.3 10.6 Z M6.15 7.9 H7.85 L7 5.2 Z" fill="#fff" fill-rule="evenodd"/></svg>
<div class="t" style="left:495.5px;top:223.75px;font-size:9.3px;color:#8a8d93;">Loading Dock Manager</div>
<svg style="left:469px;top:221px" width="14" height="13" viewBox="0 0 14 13"><path d="M4.5 10.4 L1.4 6.2 L2.7 4.5 L2.7 2.3 Q3.3 1.2 4.3 1.6 Q5.1 0.9 6.1 1.5 Q7.1 0.9 7.9 1.6 Q8.9 1.2 9.7 1.9 Q11.3 2.2 11.9 3.6 L11.7 6.5 L10.6 10.6 Z" fill="#fff"/><path d="M4.5 10.4 L1.4 6.2 L2.7 4.5 L2.7 2.3 Q3.3 1.2 4.3 1.6 Q5.1 0.9 6.1 1.5 Q7.1 0.9 7.9 1.6 Q8.9 1.2 9.7 1.9 Q11.3 2.2 11.9 3.6 L11.7 6.5 L10.6 10.6" fill="none" stroke="#111" stroke-width="0.9" stroke-linejoin="round"/></svg>
<svg style="left:0;top:0;filter:drop-shadow(1px 2px 1.2px rgba(0,0,0,0.35))" width="1024" height="590" viewBox="0 0 1024 590"><path d="M140.4 342.4 C 299.9 336.6, 481.2 307.7, 551 258" fill="none" stroke="#f2a91a" stroke-width="3.6" stroke-linecap="round"/><path d="M562 240 L565.5 262 L556 256 L546 256 Z" fill="#f2a91a"/></svg>
<div class="a" style="left:0;top:0;width:1024px;height:590px;border-top:2px solid #7f7f7f;border-left:2px solid #7f7f7f;border-right:1px solid #8a8a8a;border-bottom:1px solid #707070;z-index:100"></div>
</body></html>
